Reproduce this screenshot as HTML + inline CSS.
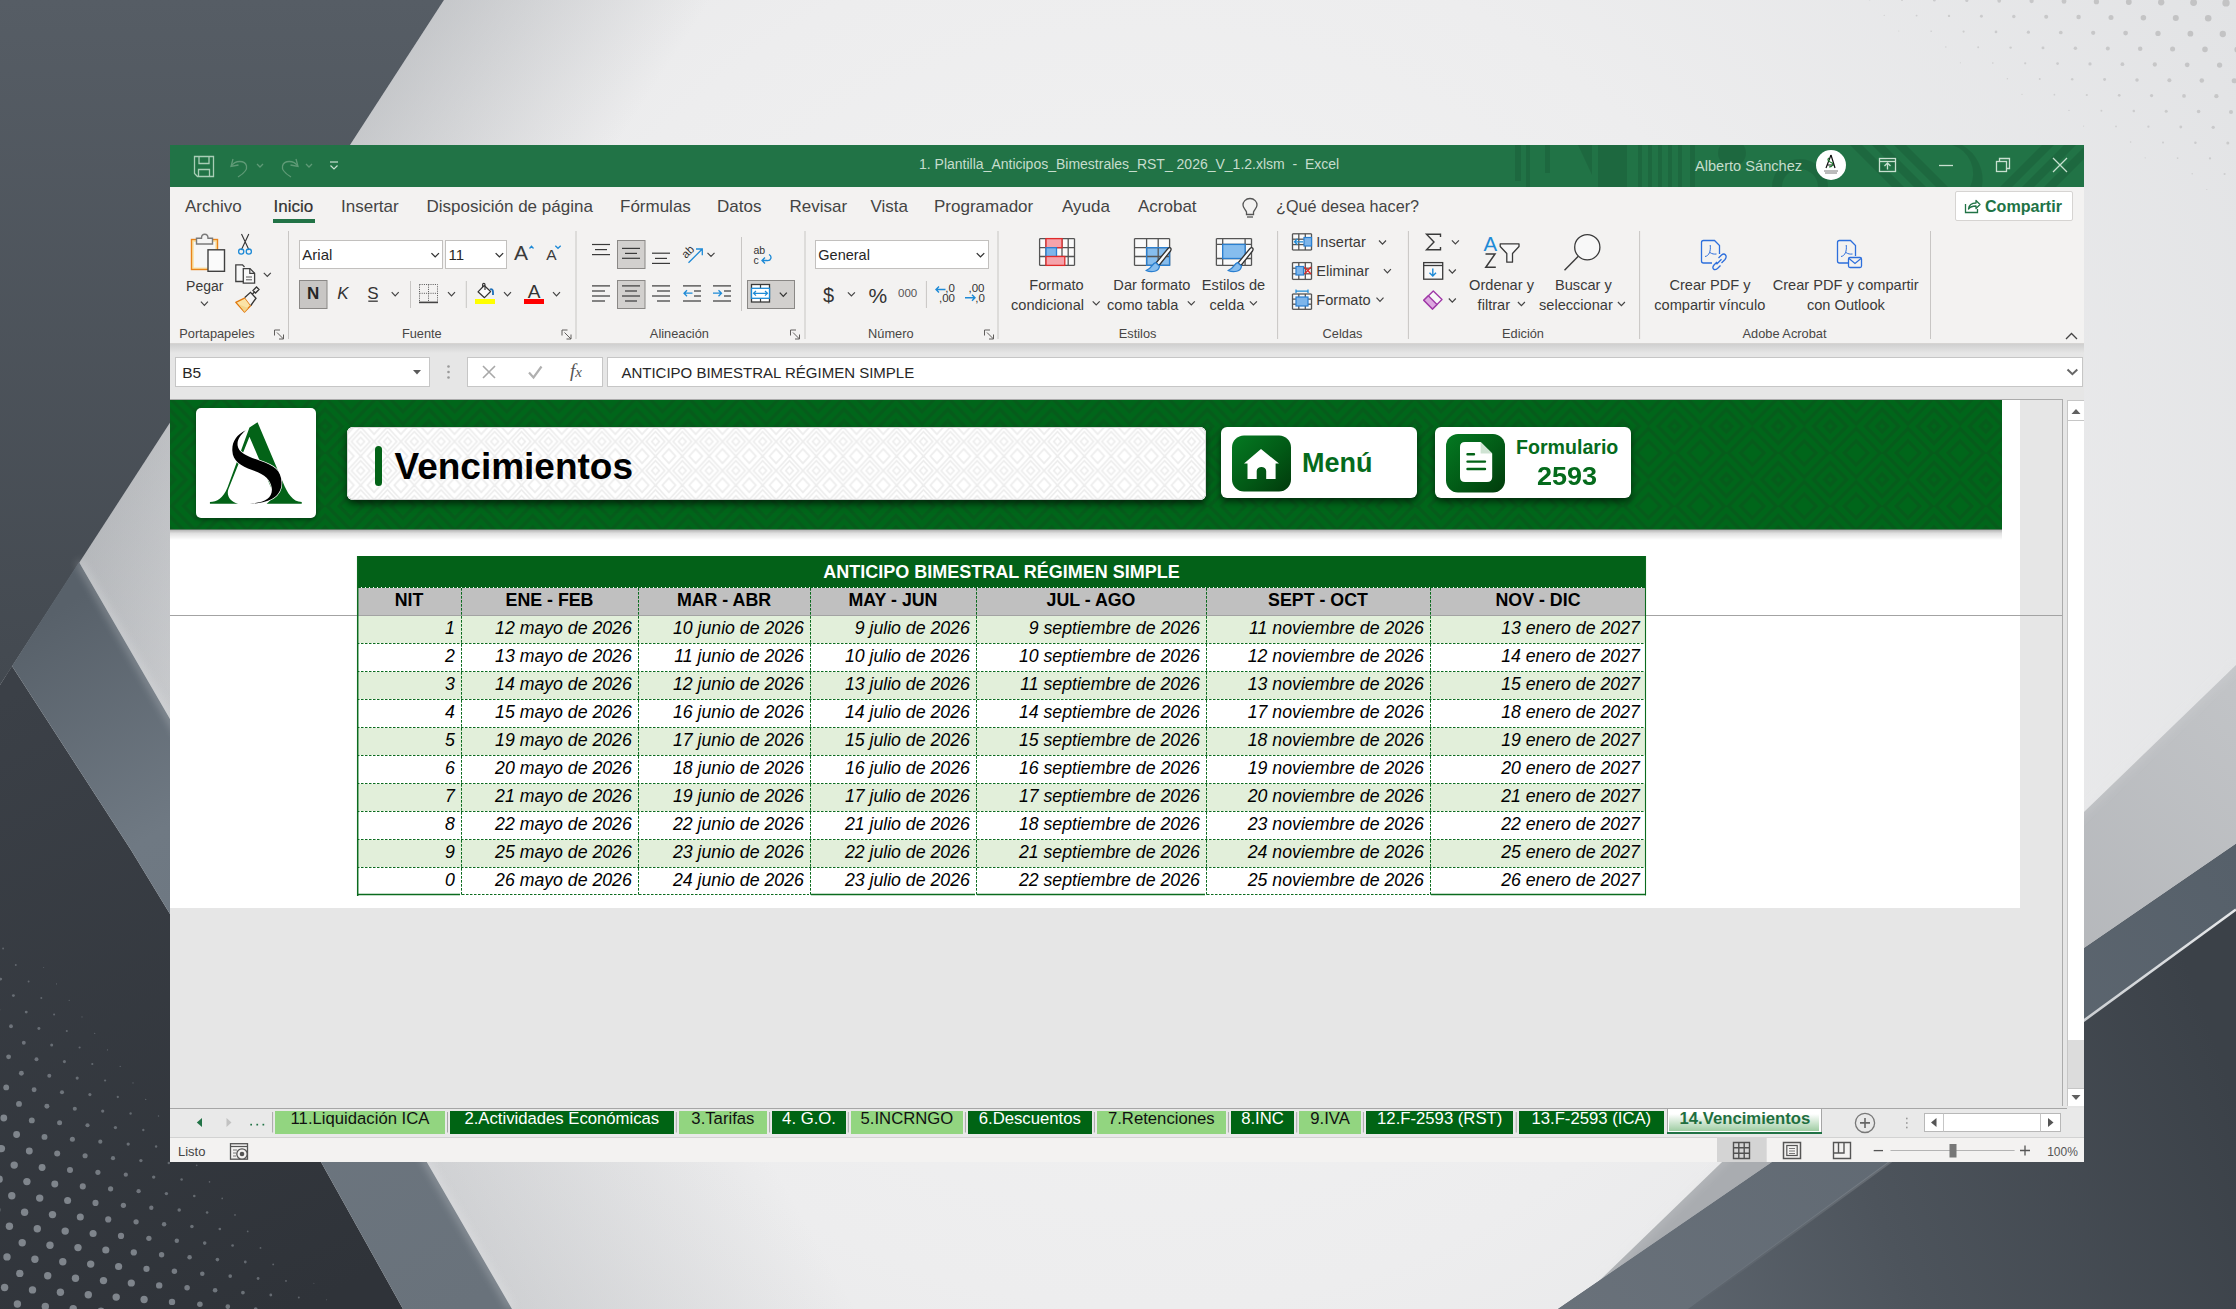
<!DOCTYPE html>
<html><head><meta charset="utf-8">
<style>
*{box-sizing:border-box;margin:0;padding:0}
html,body{width:2236px;height:1309px;overflow:hidden;font-family:"Liberation Sans",sans-serif;}
body{position:relative;background:#e9e9ea}
.a{position:absolute}
.t{position:absolute;white-space:nowrap;line-height:1}
#bg{position:absolute;left:0;top:0}
#win{position:absolute;left:170px;top:145px;width:1914px;height:1017px;background:#f3f2f1;overflow:hidden}
#title{position:absolute;left:0;top:0;width:1914px;height:42px;background:#217346}
#menu{position:absolute;left:0;top:42px;width:1914px;height:38px;background:#f3f2f1}
#ribbon{position:absolute;left:0;top:80px;width:1914px;height:119px;background:#f3f2f1}
#fbar{position:absolute;left:0;top:199px;width:1914px;height:56px;background:#e6e6e6}
#sheet{position:absolute;left:0;top:255px;width:1914px;height:708px;background:#e6e6e6}
#tabs{position:absolute;left:0;top:963px;width:1914px;height:29px;background:#f3f3f3}
#status{position:absolute;left:0;top:992px;width:1914px;height:25px;background:#f3f2f1}
</style></head>
<body>
<svg id="bg" width="2236" height="1309" viewBox="0 0 2236 1309">
  <defs>
    <radialGradient id="gl" cx="1150" cy="620" r="1250" gradientUnits="userSpaceOnUse">
      <stop offset="0" stop-color="#f4f4f4"/>
      <stop offset="0.55" stop-color="#ededee"/>
      <stop offset="1" stop-color="#e2e3e5"/>
    </radialGradient>
    <linearGradient id="gdk" x1="0" y1="0" x2="0" y2="685" gradientUnits="userSpaceOnUse">
      <stop offset="0" stop-color="#565d65"/>
      <stop offset="1" stop-color="#434950"/>
    </linearGradient>
    <linearGradient id="gdk2" x1="0" y1="700" x2="300" y2="1309" gradientUnits="userSpaceOnUse">
      <stop offset="0" stop-color="#3b4047"/>
      <stop offset="1" stop-color="#2f3339"/>
    </linearGradient>
    <linearGradient id="gband" x1="40" y1="620" x2="460" y2="1309" gradientUnits="userSpaceOnUse">
      <stop offset="0" stop-color="#58616a"/>
      <stop offset="0.3" stop-color="#6f7983"/>
      <stop offset="1" stop-color="#69727b"/>
    </linearGradient>
    <linearGradient id="gmed" x1="2236" y1="665" x2="1800" y2="1100" gradientUnits="userSpaceOnUse">
      <stop offset="0" stop-color="#c2c4c7"/>
      <stop offset="1" stop-color="#a9acb0"/>
    </linearGradient>
    <linearGradient id="gslab" x1="2236" y1="850" x2="1560" y2="1300" gradientUnits="userSpaceOnUse">
      <stop offset="0" stop-color="#56606a"/>
      <stop offset="1" stop-color="#69717a"/>
    </linearGradient>
    <linearGradient id="grd" x1="2236" y1="1100" x2="1650" y2="1309" gradientUnits="userSpaceOnUse">
      <stop offset="0" stop-color="#3b4148"/>
      <stop offset="0.6" stop-color="#4d545c"/>
      <stop offset="1" stop-color="#5e666f"/>
    </linearGradient>
    <linearGradient id="gwl" x1="2236" y1="909" x2="1688" y2="1309" gradientUnits="userSpaceOnUse">
      <stop offset="0" stop-color="#e6e8ea" stop-opacity="1"/>
      <stop offset="0.3" stop-color="#d8dbde" stop-opacity="0.9"/>
      <stop offset="0.6" stop-color="#c0c4c8" stop-opacity="0.25"/>
      <stop offset="1" stop-color="#c0c4c8" stop-opacity="0"/>
    </linearGradient>
    <linearGradient id="sh1" x1="222" y1="342" x2="410" y2="464" gradientUnits="userSpaceOnUse">
      <stop offset="0" stop-color="#8e9297" stop-opacity="0.38"/>
      <stop offset="1" stop-color="#8e9297" stop-opacity="0"/>
    </linearGradient>
    <linearGradient id="sh2" x1="295" y1="935" x2="555" y2="785" gradientUnits="userSpaceOnUse">
      <stop offset="0" stop-color="#8e9297" stop-opacity="0.28"/>
      <stop offset="1" stop-color="#8e9297" stop-opacity="0"/>
    </linearGradient>
    <filter id="blur8" x="-50%" y="-50%" width="200%" height="200%"><feGaussianBlur stdDeviation="14"/></filter>
    <filter id="blur3" x="-50%" y="-50%" width="200%" height="200%"><feGaussianBlur stdDeviation="4"/></filter>
  </defs>
  <rect x="0" y="0" width="2236" height="1309" fill="url(#gl)"/>
  <!-- soft shadows in light areas -->
  <polygon points="444,0 1400,0 1400,1309 512,1309 79,562 0,685" fill="url(#sh1)"/>
  <polygon points="79,562 512,1309 1400,1309 1400,0 444,0" fill="url(#sh2)"/>
  <polygon points="0,0 444,0 0,685" fill="url(#gdk)"/>
  <polygon points="0,685 12,666 131,850 321,1162 403,1309 0,1309" fill="url(#gdk2)"/>
  <polygon points="79,562 12,666 131,850 321,1162 403,1309 512,1309" fill="url(#gband)"/>
  <path d="M79 562 L512 1309" stroke="#f2f3f5" stroke-width="3" opacity="0.6" filter="url(#blur3)"/>
  <g><circle cx="4.6" cy="1287.5" r="3.70" fill="#7f858c" fill-opacity="1.00"/><circle cx="17.4" cy="1304.0" r="3.70" fill="#7f858c" fill-opacity="1.00"/><circle cx="7.0" cy="1256.9" r="3.70" fill="#7f858c" fill-opacity="1.00"/><circle cx="19.8" cy="1273.4" r="3.70" fill="#7f858c" fill-opacity="1.00"/><circle cx="32.5" cy="1289.9" r="3.70" fill="#7f858c" fill-opacity="1.00"/><circle cx="45.3" cy="1306.4" r="3.70" fill="#7f858c" fill-opacity="1.00"/><circle cx="-3.3" cy="1209.8" r="3.70" fill="#7f858c" fill-opacity="1.00"/><circle cx="9.4" cy="1226.3" r="3.70" fill="#7f858c" fill-opacity="1.00"/><circle cx="22.2" cy="1242.8" r="3.70" fill="#7f858c" fill-opacity="1.00"/><circle cx="34.9" cy="1259.3" r="3.70" fill="#7f858c" fill-opacity="1.00"/><circle cx="47.7" cy="1275.8" r="3.70" fill="#7f858c" fill-opacity="1.00"/><circle cx="60.4" cy="1292.3" r="3.70" fill="#7f858c" fill-opacity="1.00"/><circle cx="73.2" cy="1308.8" r="3.70" fill="#7f858c" fill-opacity="1.00"/><circle cx="-0.9" cy="1179.2" r="3.70" fill="#7f858c" fill-opacity="1.00"/><circle cx="11.8" cy="1195.7" r="3.70" fill="#7f858c" fill-opacity="1.00"/><circle cx="24.6" cy="1212.2" r="3.70" fill="#7f858c" fill-opacity="1.00"/><circle cx="37.3" cy="1228.7" r="3.70" fill="#7f858c" fill-opacity="1.00"/><circle cx="50.0" cy="1245.2" r="3.70" fill="#7f858c" fill-opacity="1.00"/><circle cx="62.8" cy="1261.7" r="3.70" fill="#7f858c" fill-opacity="1.00"/><circle cx="75.5" cy="1278.2" r="3.70" fill="#7f858c" fill-opacity="1.00"/><circle cx="88.3" cy="1294.7" r="3.70" fill="#7f858c" fill-opacity="1.00"/><circle cx="101.0" cy="1311.2" r="3.70" fill="#7f858c" fill-opacity="1.00"/><circle cx="1.4" cy="1148.6" r="3.70" fill="#7f858c" fill-opacity="1.00"/><circle cx="14.2" cy="1165.1" r="3.70" fill="#7f858c" fill-opacity="1.00"/><circle cx="26.9" cy="1181.6" r="3.70" fill="#7f858c" fill-opacity="1.00"/><circle cx="39.7" cy="1198.1" r="3.70" fill="#7f858c" fill-opacity="1.00"/><circle cx="52.5" cy="1214.6" r="3.70" fill="#7f858c" fill-opacity="1.00"/><circle cx="65.2" cy="1231.1" r="3.70" fill="#7f858c" fill-opacity="1.00"/><circle cx="78.0" cy="1247.6" r="3.70" fill="#7f858c" fill-opacity="1.00"/><circle cx="90.7" cy="1264.1" r="3.70" fill="#7f858c" fill-opacity="1.00"/><circle cx="103.5" cy="1280.6" r="3.70" fill="#7f858c" fill-opacity="1.00"/><circle cx="116.2" cy="1297.1" r="3.70" fill="#7f858c" fill-opacity="1.00"/><circle cx="128.9" cy="1313.6" r="3.70" fill="#7f858c" fill-opacity="1.00"/><circle cx="3.8" cy="1118.0" r="3.39" fill="#7f858c" fill-opacity="1.00"/><circle cx="16.6" cy="1134.5" r="3.42" fill="#7f858c" fill-opacity="1.00"/><circle cx="29.3" cy="1151.0" r="3.44" fill="#7f858c" fill-opacity="1.00"/><circle cx="42.1" cy="1167.5" r="3.46" fill="#7f858c" fill-opacity="1.00"/><circle cx="54.8" cy="1184.0" r="3.49" fill="#7f858c" fill-opacity="1.00"/><circle cx="67.6" cy="1200.5" r="3.51" fill="#7f858c" fill-opacity="1.00"/><circle cx="80.3" cy="1217.0" r="3.53" fill="#7f858c" fill-opacity="1.00"/><circle cx="93.1" cy="1233.5" r="3.55" fill="#7f858c" fill-opacity="1.00"/><circle cx="105.8" cy="1250.0" r="3.58" fill="#7f858c" fill-opacity="1.00"/><circle cx="118.6" cy="1266.5" r="3.60" fill="#7f858c" fill-opacity="1.00"/><circle cx="131.3" cy="1283.0" r="3.62" fill="#7f858c" fill-opacity="1.00"/><circle cx="144.1" cy="1299.5" r="3.65" fill="#7f858c" fill-opacity="1.00"/><circle cx="6.2" cy="1087.4" r="2.91" fill="#7f858c" fill-opacity="0.92"/><circle cx="19.0" cy="1103.9" r="2.93" fill="#7f858c" fill-opacity="0.92"/><circle cx="31.8" cy="1120.4" r="2.95" fill="#7f858c" fill-opacity="0.93"/><circle cx="44.5" cy="1136.9" r="2.97" fill="#7f858c" fill-opacity="0.93"/><circle cx="57.2" cy="1153.4" r="3.00" fill="#7f858c" fill-opacity="0.94"/><circle cx="70.0" cy="1169.9" r="3.02" fill="#7f858c" fill-opacity="0.94"/><circle cx="82.8" cy="1186.4" r="3.04" fill="#7f858c" fill-opacity="0.94"/><circle cx="95.5" cy="1202.9" r="3.07" fill="#7f858c" fill-opacity="0.95"/><circle cx="108.2" cy="1219.4" r="3.09" fill="#7f858c" fill-opacity="0.95"/><circle cx="121.0" cy="1235.9" r="3.11" fill="#7f858c" fill-opacity="0.95"/><circle cx="133.8" cy="1252.4" r="3.14" fill="#7f858c" fill-opacity="0.96"/><circle cx="146.5" cy="1268.9" r="3.16" fill="#7f858c" fill-opacity="0.96"/><circle cx="159.2" cy="1285.4" r="3.18" fill="#7f858c" fill-opacity="0.97"/><circle cx="172.0" cy="1301.9" r="3.21" fill="#7f858c" fill-opacity="0.97"/><circle cx="-4.1" cy="1040.3" r="2.40" fill="#7f858c" fill-opacity="0.84"/><circle cx="8.6" cy="1056.8" r="2.42" fill="#7f858c" fill-opacity="0.84"/><circle cx="21.4" cy="1073.3" r="2.44" fill="#7f858c" fill-opacity="0.85"/><circle cx="34.1" cy="1089.8" r="2.46" fill="#7f858c" fill-opacity="0.85"/><circle cx="46.9" cy="1106.3" r="2.49" fill="#7f858c" fill-opacity="0.85"/><circle cx="59.6" cy="1122.8" r="2.51" fill="#7f858c" fill-opacity="0.86"/><circle cx="72.4" cy="1139.3" r="2.53" fill="#7f858c" fill-opacity="0.86"/><circle cx="85.1" cy="1155.8" r="2.56" fill="#7f858c" fill-opacity="0.86"/><circle cx="97.9" cy="1172.3" r="2.58" fill="#7f858c" fill-opacity="0.87"/><circle cx="110.6" cy="1188.8" r="2.60" fill="#7f858c" fill-opacity="0.87"/><circle cx="123.4" cy="1205.3" r="2.63" fill="#7f858c" fill-opacity="0.88"/><circle cx="136.1" cy="1221.8" r="2.65" fill="#7f858c" fill-opacity="0.88"/><circle cx="148.9" cy="1238.3" r="2.67" fill="#7f858c" fill-opacity="0.88"/><circle cx="161.6" cy="1254.8" r="2.70" fill="#7f858c" fill-opacity="0.89"/><circle cx="174.4" cy="1271.3" r="2.72" fill="#7f858c" fill-opacity="0.89"/><circle cx="187.1" cy="1287.8" r="2.74" fill="#7f858c" fill-opacity="0.89"/><circle cx="199.9" cy="1304.3" r="2.77" fill="#7f858c" fill-opacity="0.90"/><circle cx="-1.7" cy="1009.7" r="1.91" fill="#7f858c" fill-opacity="0.76"/><circle cx="11.0" cy="1026.2" r="1.93" fill="#7f858c" fill-opacity="0.76"/><circle cx="23.8" cy="1042.7" r="1.95" fill="#7f858c" fill-opacity="0.77"/><circle cx="36.5" cy="1059.2" r="1.98" fill="#7f858c" fill-opacity="0.77"/><circle cx="49.3" cy="1075.7" r="2.00" fill="#7f858c" fill-opacity="0.77"/><circle cx="62.0" cy="1092.2" r="2.02" fill="#7f858c" fill-opacity="0.78"/><circle cx="74.8" cy="1108.7" r="2.05" fill="#7f858c" fill-opacity="0.78"/><circle cx="87.5" cy="1125.2" r="2.07" fill="#7f858c" fill-opacity="0.79"/><circle cx="100.3" cy="1141.7" r="2.09" fill="#7f858c" fill-opacity="0.79"/><circle cx="113.0" cy="1158.2" r="2.12" fill="#7f858c" fill-opacity="0.79"/><circle cx="125.8" cy="1174.7" r="2.14" fill="#7f858c" fill-opacity="0.80"/><circle cx="138.6" cy="1191.2" r="2.16" fill="#7f858c" fill-opacity="0.80"/><circle cx="151.3" cy="1207.7" r="2.19" fill="#7f858c" fill-opacity="0.80"/><circle cx="164.1" cy="1224.2" r="2.21" fill="#7f858c" fill-opacity="0.81"/><circle cx="176.8" cy="1240.7" r="2.23" fill="#7f858c" fill-opacity="0.81"/><circle cx="189.6" cy="1257.2" r="2.26" fill="#7f858c" fill-opacity="0.82"/><circle cx="202.3" cy="1273.7" r="2.28" fill="#7f858c" fill-opacity="0.82"/><circle cx="215.1" cy="1290.2" r="2.30" fill="#7f858c" fill-opacity="0.82"/><circle cx="227.8" cy="1306.7" r="2.33" fill="#7f858c" fill-opacity="0.83"/><circle cx="0.7" cy="979.1" r="1.42" fill="#7f858c" fill-opacity="0.68"/><circle cx="13.4" cy="995.6" r="1.44" fill="#7f858c" fill-opacity="0.68"/><circle cx="26.2" cy="1012.1" r="1.47" fill="#7f858c" fill-opacity="0.69"/><circle cx="38.9" cy="1028.6" r="1.49" fill="#7f858c" fill-opacity="0.69"/><circle cx="51.7" cy="1045.1" r="1.51" fill="#7f858c" fill-opacity="0.70"/><circle cx="64.4" cy="1061.6" r="1.54" fill="#7f858c" fill-opacity="0.70"/><circle cx="77.2" cy="1078.1" r="1.56" fill="#7f858c" fill-opacity="0.70"/><circle cx="89.9" cy="1094.6" r="1.58" fill="#7f858c" fill-opacity="0.71"/><circle cx="102.7" cy="1111.1" r="1.61" fill="#7f858c" fill-opacity="0.71"/><circle cx="115.4" cy="1127.6" r="1.63" fill="#7f858c" fill-opacity="0.71"/><circle cx="128.2" cy="1144.1" r="1.65" fill="#7f858c" fill-opacity="0.72"/><circle cx="140.9" cy="1160.6" r="1.68" fill="#7f858c" fill-opacity="0.72"/><circle cx="153.7" cy="1177.1" r="1.70" fill="#7f858c" fill-opacity="0.73"/><circle cx="166.4" cy="1193.6" r="1.72" fill="#7f858c" fill-opacity="0.73"/><circle cx="179.2" cy="1210.1" r="1.75" fill="#7f858c" fill-opacity="0.73"/><circle cx="191.9" cy="1226.6" r="1.77" fill="#7f858c" fill-opacity="0.74"/><circle cx="204.7" cy="1243.1" r="1.79" fill="#7f858c" fill-opacity="0.74"/><circle cx="217.4" cy="1259.6" r="1.82" fill="#7f858c" fill-opacity="0.74"/><circle cx="230.2" cy="1276.1" r="1.84" fill="#7f858c" fill-opacity="0.75"/><circle cx="242.9" cy="1292.6" r="1.86" fill="#7f858c" fill-opacity="0.75"/><circle cx="255.7" cy="1309.1" r="1.89" fill="#7f858c" fill-opacity="0.76"/><circle cx="3.1" cy="948.5" r="0.93" fill="#7f858c" fill-opacity="0.60"/><circle cx="15.8" cy="965.0" r="0.96" fill="#7f858c" fill-opacity="0.61"/><circle cx="28.6" cy="981.5" r="0.98" fill="#7f858c" fill-opacity="0.61"/><circle cx="41.3" cy="998.0" r="1.00" fill="#7f858c" fill-opacity="0.61"/><circle cx="54.1" cy="1014.5" r="1.03" fill="#7f858c" fill-opacity="0.62"/><circle cx="66.8" cy="1031.0" r="1.05" fill="#7f858c" fill-opacity="0.62"/><circle cx="79.6" cy="1047.5" r="1.07" fill="#7f858c" fill-opacity="0.62"/><circle cx="92.3" cy="1064.0" r="1.10" fill="#7f858c" fill-opacity="0.63"/><circle cx="105.1" cy="1080.5" r="1.12" fill="#7f858c" fill-opacity="0.63"/><circle cx="117.8" cy="1097.0" r="1.14" fill="#7f858c" fill-opacity="0.64"/><circle cx="130.6" cy="1113.5" r="1.17" fill="#7f858c" fill-opacity="0.64"/><circle cx="143.3" cy="1130.0" r="1.19" fill="#7f858c" fill-opacity="0.64"/><circle cx="156.1" cy="1146.5" r="1.21" fill="#7f858c" fill-opacity="0.65"/><circle cx="168.8" cy="1163.0" r="1.24" fill="#7f858c" fill-opacity="0.65"/><circle cx="181.6" cy="1179.5" r="1.26" fill="#7f858c" fill-opacity="0.65"/><circle cx="194.3" cy="1196.0" r="1.28" fill="#7f858c" fill-opacity="0.66"/><circle cx="207.1" cy="1212.5" r="1.31" fill="#7f858c" fill-opacity="0.66"/><circle cx="219.8" cy="1229.0" r="1.33" fill="#7f858c" fill-opacity="0.67"/><circle cx="232.6" cy="1245.5" r="1.35" fill="#7f858c" fill-opacity="0.67"/><circle cx="245.3" cy="1262.0" r="1.38" fill="#7f858c" fill-opacity="0.67"/><circle cx="258.1" cy="1278.5" r="1.40" fill="#7f858c" fill-opacity="0.68"/><circle cx="270.8" cy="1295.0" r="1.42" fill="#7f858c" fill-opacity="0.68"/><circle cx="283.6" cy="1311.5" r="1.44" fill="#7f858c" fill-opacity="0.68"/><circle cx="43.7" cy="967.4" r="0.52" fill="#7f858c" fill-opacity="0.53"/><circle cx="56.5" cy="983.9" r="0.54" fill="#7f858c" fill-opacity="0.54"/><circle cx="69.2" cy="1000.4" r="0.56" fill="#7f858c" fill-opacity="0.54"/><circle cx="82.0" cy="1016.9" r="0.59" fill="#7f858c" fill-opacity="0.55"/><circle cx="94.7" cy="1033.4" r="0.61" fill="#7f858c" fill-opacity="0.55"/><circle cx="107.5" cy="1049.9" r="0.63" fill="#7f858c" fill-opacity="0.55"/><circle cx="120.2" cy="1066.4" r="0.66" fill="#7f858c" fill-opacity="0.56"/><circle cx="133.0" cy="1082.9" r="0.68" fill="#7f858c" fill-opacity="0.56"/><circle cx="145.7" cy="1099.4" r="0.70" fill="#7f858c" fill-opacity="0.56"/><circle cx="158.5" cy="1115.9" r="0.73" fill="#7f858c" fill-opacity="0.57"/><circle cx="171.2" cy="1132.4" r="0.75" fill="#7f858c" fill-opacity="0.57"/><circle cx="184.0" cy="1148.9" r="0.77" fill="#7f858c" fill-opacity="0.58"/><circle cx="196.7" cy="1165.4" r="0.80" fill="#7f858c" fill-opacity="0.58"/><circle cx="209.5" cy="1181.9" r="0.82" fill="#7f858c" fill-opacity="0.58"/><circle cx="222.2" cy="1198.4" r="0.84" fill="#7f858c" fill-opacity="0.59"/><circle cx="235.0" cy="1214.9" r="0.87" fill="#7f858c" fill-opacity="0.59"/><circle cx="247.7" cy="1231.4" r="0.89" fill="#7f858c" fill-opacity="0.59"/><circle cx="260.5" cy="1247.9" r="0.91" fill="#7f858c" fill-opacity="0.60"/><circle cx="273.2" cy="1264.4" r="0.93" fill="#7f858c" fill-opacity="0.60"/><circle cx="286.0" cy="1280.9" r="0.96" fill="#7f858c" fill-opacity="0.61"/><circle cx="298.8" cy="1297.4" r="0.98" fill="#7f858c" fill-opacity="0.61"/><circle cx="311.5" cy="1313.9" r="1.00" fill="#7f858c" fill-opacity="0.61"/><circle cx="313.9" cy="1283.3" r="0.52" fill="#7f858c" fill-opacity="0.53"/><circle cx="326.6" cy="1299.8" r="0.54" fill="#7f858c" fill-opacity="0.54"/></g>
  <g><circle cx="1837.2" cy="-0.7" r="0.53" fill="#c3c3c4" fill-opacity="0.63"/><circle cx="1869.6" cy="-0.4" r="0.79" fill="#c3c3c4" fill-opacity="0.68"/><circle cx="1902.0" cy="-0.1" r="1.06" fill="#c3c3c4" fill-opacity="0.72"/><circle cx="1884.2" cy="15.3" r="0.67" fill="#c3c3c4" fill-opacity="0.66"/><circle cx="1934.4" cy="0.2" r="1.32" fill="#c3c3c4" fill-opacity="0.76"/><circle cx="1916.6" cy="15.6" r="0.93" fill="#c3c3c4" fill-opacity="0.70"/><circle cx="1898.8" cy="31.0" r="0.55" fill="#c3c3c4" fill-opacity="0.64"/><circle cx="1966.8" cy="0.5" r="1.58" fill="#c3c3c4" fill-opacity="0.80"/><circle cx="1949.0" cy="15.9" r="1.19" fill="#c3c3c4" fill-opacity="0.74"/><circle cx="1931.2" cy="31.3" r="0.81" fill="#c3c3c4" fill-opacity="0.68"/><circle cx="1999.2" cy="0.8" r="1.84" fill="#c3c3c4" fill-opacity="0.84"/><circle cx="1981.4" cy="16.2" r="1.46" fill="#c3c3c4" fill-opacity="0.78"/><circle cx="1963.6" cy="31.6" r="1.07" fill="#c3c3c4" fill-opacity="0.72"/><circle cx="1945.8" cy="47.0" r="0.68" fill="#c3c3c4" fill-opacity="0.66"/><circle cx="2031.6" cy="1.1" r="2.10" fill="#c3c3c4" fill-opacity="0.88"/><circle cx="2013.8" cy="16.5" r="1.72" fill="#c3c3c4" fill-opacity="0.82"/><circle cx="1996.0" cy="31.9" r="1.33" fill="#c3c3c4" fill-opacity="0.76"/><circle cx="1978.2" cy="47.3" r="0.95" fill="#c3c3c4" fill-opacity="0.70"/><circle cx="1960.4" cy="62.7" r="0.56" fill="#c3c3c4" fill-opacity="0.64"/><circle cx="2064.0" cy="1.4" r="2.36" fill="#c3c3c4" fill-opacity="0.92"/><circle cx="2046.2" cy="16.8" r="1.98" fill="#c3c3c4" fill-opacity="0.86"/><circle cx="2028.4" cy="32.2" r="1.59" fill="#c3c3c4" fill-opacity="0.80"/><circle cx="2010.6" cy="47.6" r="1.21" fill="#c3c3c4" fill-opacity="0.74"/><circle cx="1992.8" cy="63.0" r="0.82" fill="#c3c3c4" fill-opacity="0.68"/><circle cx="2096.4" cy="1.7" r="2.63" fill="#c3c3c4" fill-opacity="0.96"/><circle cx="2078.6" cy="17.1" r="2.24" fill="#c3c3c4" fill-opacity="0.90"/><circle cx="2060.8" cy="32.5" r="1.85" fill="#c3c3c4" fill-opacity="0.84"/><circle cx="2043.0" cy="47.9" r="1.47" fill="#c3c3c4" fill-opacity="0.78"/><circle cx="2025.2" cy="63.3" r="1.08" fill="#c3c3c4" fill-opacity="0.72"/><circle cx="2007.4" cy="78.7" r="0.70" fill="#c3c3c4" fill-opacity="0.66"/><circle cx="2128.8" cy="2.0" r="2.89" fill="#c3c3c4" fill-opacity="1.00"/><circle cx="2111.0" cy="17.4" r="2.50" fill="#c3c3c4" fill-opacity="0.95"/><circle cx="2093.2" cy="32.8" r="2.12" fill="#c3c3c4" fill-opacity="0.88"/><circle cx="2075.4" cy="48.2" r="1.73" fill="#c3c3c4" fill-opacity="0.82"/><circle cx="2057.6" cy="63.6" r="1.35" fill="#c3c3c4" fill-opacity="0.76"/><circle cx="2039.8" cy="79.0" r="0.96" fill="#c3c3c4" fill-opacity="0.70"/><circle cx="2022.0" cy="94.4" r="0.58" fill="#c3c3c4" fill-opacity="0.64"/><circle cx="2161.2" cy="2.3" r="3.15" fill="#c3c3c4" fill-opacity="1.00"/><circle cx="2143.4" cy="17.7" r="2.76" fill="#c3c3c4" fill-opacity="0.99"/><circle cx="2125.6" cy="33.1" r="2.38" fill="#c3c3c4" fill-opacity="0.93"/><circle cx="2107.8" cy="48.5" r="1.99" fill="#c3c3c4" fill-opacity="0.86"/><circle cx="2090.0" cy="63.9" r="1.61" fill="#c3c3c4" fill-opacity="0.80"/><circle cx="2072.2" cy="79.3" r="1.22" fill="#c3c3c4" fill-opacity="0.74"/><circle cx="2054.4" cy="94.7" r="0.84" fill="#c3c3c4" fill-opacity="0.68"/><circle cx="2193.6" cy="2.6" r="3.41" fill="#c3c3c4" fill-opacity="1.00"/><circle cx="2175.8" cy="18.0" r="3.03" fill="#c3c3c4" fill-opacity="1.00"/><circle cx="2158.0" cy="33.4" r="2.64" fill="#c3c3c4" fill-opacity="0.97"/><circle cx="2140.2" cy="48.8" r="2.25" fill="#c3c3c4" fill-opacity="0.91"/><circle cx="2122.4" cy="64.2" r="1.87" fill="#c3c3c4" fill-opacity="0.85"/><circle cx="2104.6" cy="79.6" r="1.48" fill="#c3c3c4" fill-opacity="0.78"/><circle cx="2086.8" cy="95.0" r="1.10" fill="#c3c3c4" fill-opacity="0.72"/><circle cx="2069.0" cy="110.4" r="0.71" fill="#c3c3c4" fill-opacity="0.66"/><circle cx="2226.0" cy="2.9" r="3.67" fill="#c3c3c4" fill-opacity="1.00"/><circle cx="2208.2" cy="18.3" r="3.29" fill="#c3c3c4" fill-opacity="1.00"/><circle cx="2190.4" cy="33.7" r="2.90" fill="#c3c3c4" fill-opacity="1.00"/><circle cx="2172.6" cy="49.1" r="2.52" fill="#c3c3c4" fill-opacity="0.95"/><circle cx="2154.8" cy="64.5" r="2.13" fill="#c3c3c4" fill-opacity="0.89"/><circle cx="2137.0" cy="79.9" r="1.75" fill="#c3c3c4" fill-opacity="0.83"/><circle cx="2119.2" cy="95.3" r="1.36" fill="#c3c3c4" fill-opacity="0.76"/><circle cx="2101.4" cy="110.7" r="0.98" fill="#c3c3c4" fill-opacity="0.70"/><circle cx="2083.6" cy="126.1" r="0.59" fill="#c3c3c4" fill-opacity="0.64"/><circle cx="2240.6" cy="18.6" r="3.55" fill="#c3c3c4" fill-opacity="1.00"/><circle cx="2222.8" cy="34.0" r="3.16" fill="#c3c3c4" fill-opacity="1.00"/><circle cx="2205.0" cy="49.4" r="2.78" fill="#c3c3c4" fill-opacity="0.99"/><circle cx="2187.2" cy="64.8" r="2.39" fill="#c3c3c4" fill-opacity="0.93"/><circle cx="2169.4" cy="80.2" r="2.01" fill="#c3c3c4" fill-opacity="0.87"/><circle cx="2151.6" cy="95.6" r="1.62" fill="#c3c3c4" fill-opacity="0.81"/><circle cx="2133.8" cy="111.0" r="1.24" fill="#c3c3c4" fill-opacity="0.75"/><circle cx="2116.0" cy="126.4" r="0.85" fill="#c3c3c4" fill-opacity="0.68"/><circle cx="2237.4" cy="49.7" r="3.04" fill="#c3c3c4" fill-opacity="1.00"/><circle cx="2219.6" cy="65.1" r="2.65" fill="#c3c3c4" fill-opacity="0.97"/><circle cx="2201.8" cy="80.5" r="2.27" fill="#c3c3c4" fill-opacity="0.91"/><circle cx="2184.0" cy="95.9" r="1.88" fill="#c3c3c4" fill-opacity="0.85"/><circle cx="2166.2" cy="111.3" r="1.50" fill="#c3c3c4" fill-opacity="0.79"/><circle cx="2148.4" cy="126.7" r="1.11" fill="#c3c3c4" fill-opacity="0.73"/><circle cx="2130.6" cy="142.1" r="0.73" fill="#c3c3c4" fill-opacity="0.67"/><circle cx="2234.2" cy="80.8" r="2.53" fill="#c3c3c4" fill-opacity="0.95"/><circle cx="2216.4" cy="96.2" r="2.15" fill="#c3c3c4" fill-opacity="0.89"/><circle cx="2198.6" cy="111.6" r="1.76" fill="#c3c3c4" fill-opacity="0.83"/><circle cx="2180.8" cy="127.0" r="1.38" fill="#c3c3c4" fill-opacity="0.77"/><circle cx="2163.0" cy="142.4" r="0.99" fill="#c3c3c4" fill-opacity="0.71"/><circle cx="2145.2" cy="157.8" r="0.61" fill="#c3c3c4" fill-opacity="0.65"/><circle cx="2231.0" cy="111.9" r="2.02" fill="#c3c3c4" fill-opacity="0.87"/><circle cx="2213.2" cy="127.3" r="1.64" fill="#c3c3c4" fill-opacity="0.81"/><circle cx="2195.4" cy="142.7" r="1.25" fill="#c3c3c4" fill-opacity="0.75"/><circle cx="2177.6" cy="158.1" r="0.87" fill="#c3c3c4" fill-opacity="0.69"/><circle cx="2227.8" cy="143.0" r="1.51" fill="#c3c3c4" fill-opacity="0.79"/><circle cx="2210.0" cy="158.4" r="1.13" fill="#c3c3c4" fill-opacity="0.73"/><circle cx="2192.2" cy="173.8" r="0.74" fill="#c3c3c4" fill-opacity="0.67"/><circle cx="2242.4" cy="158.7" r="1.39" fill="#c3c3c4" fill-opacity="0.77"/><circle cx="2224.6" cy="174.1" r="1.01" fill="#c3c3c4" fill-opacity="0.71"/><circle cx="2206.8" cy="189.5" r="0.62" fill="#c3c3c4" fill-opacity="0.65"/><circle cx="2239.2" cy="189.8" r="0.88" fill="#c3c3c4" fill-opacity="0.69"/></g>
  <polygon points="2236,665 1599,1281 2236,844" fill="url(#gmed)"/>
  <path d="M2236 665 L1599 1281" stroke="#e2e3e5" stroke-width="2" opacity="0.7" filter="url(#blur3)"/>
  <polygon points="2236,844 1558,1309 2236,1309" fill="url(#grd)"/>
  <polygon points="2236,844 1558,1309 1688,1309 2236,909" fill="url(#gslab)"/>
  <path d="M2236 909.5 L1688 1309.5" stroke="url(#gwl)" stroke-width="2.6"/>
</svg>

<div id="win">
  <div id="title"></div>
  <div id="menu"></div>
  <div id="ribbon"></div>
  <div id="fbar"></div>
  <div id="sheet"></div>
  <div id="tabs"></div>
  <div id="status"></div>
</div>

<!-- TITLE BAR -->
<svg class="a" style="left:1500px;top:145px" width="584" height="42" viewBox="0 0 584 42">
  <g fill="#000" opacity="0.09">
    <rect x="15" y="0" width="6" height="36"/><rect x="26" y="0" width="4" height="42"/><rect x="45" y="0" width="5" height="28"/>
    <path d="M78 0 L92 0 L92 30 Z"/>
    <rect x="98" y="0" width="29" height="42"/>
    <rect x="138" y="0" width="4" height="42"/><rect x="148" y="0" width="4" height="42"/><rect x="158" y="0" width="4" height="42"/><rect x="168" y="0" width="4" height="42"/><rect x="178" y="0" width="4" height="42"/><rect x="190" y="0" width="5" height="42"/>
    <circle cx="232" cy="8" r="14"/>
    <path d="M272 42 A28 28 0 0 1 328 42 L318 42 A18 18 0 0 0 282 42 Z"/>
    <path d="M350 0 L362 0 L404 42 L392 42 Z"/><path d="M372 0 L384 0 L426 42 L414 42 Z"/><path d="M394 0 L406 0 L448 42 L436 42 Z"/>
    <path d="M462 0 A40 40 0 0 1 482 42 L470 42 A30 30 0 0 0 452 0 Z"/>
    <path d="M500 42 L542 0 L554 0 L512 42 Z"/><path d="M522 42 L564 0 L576 0 L534 42 Z"/><path d="M544 42 L584 2 L584 14 L556 42 Z"/>
  </g>
</svg>
<svg class="a" style="left:190px;top:153px" width="160" height="28" viewBox="0 0 160 28">
  <g fill="none" stroke="#a9cdb6" stroke-width="1.3">
    <path d="M4.5 3.5 H23.5 V23.5 H7.5 L4.5 20.5 Z"/>
    <path d="M9 3.5 V10.5 H19 V3.5"/>
    <path d="M8.5 23.5 V16.5 H19.5 V23.5"/>
  </g>
  <g fill="none" stroke="#5f9a76" stroke-width="1.3">
    <path d="M43 6 L41 13.5 L48.5 12"/>
    <path d="M41.5 13 C45 7 55 7 56.5 13 C57.5 17 53 21 48 24"/>
    <path d="M67 11 L70 14 L73 11"/>
    <path d="M106 6 L108 13.5 L100.5 12"/>
    <path d="M107.5 13 C104 7 94 7 92.5 13 C91.5 17 96 21 101 24"/>
    <path d="M116 11 L119 14 L122 11"/>
  </g>
  <g fill="none" stroke="#c8e0d0" stroke-width="1.2">
    <path d="M140 9 H148"/><path d="M140.5 12.5 L144 16 L147.5 12.5"/>
  </g>
</svg>
<div class="t" style="left:919px;top:157px;font-size:14px;color:#c6ddcd">1. Plantilla_Anticipos_Bimestrales_RST_ 2026_V_1.2.xlsm&nbsp;&nbsp;-&nbsp;&nbsp;Excel</div>
<div class="t" style="left:1695px;top:158.5px;font-size:14.6px;color:#c6ddcd">Alberto Sánchez</div>
<svg class="a" style="left:1815px;top:149px" width="32" height="32" viewBox="0 0 32 32">
  <circle cx="16" cy="16" r="15" fill="#fff"/>
  <path d="M16 6 L11 19 M16 6 L20 19 M12.5 16 H19" stroke="#111" stroke-width="1.2" fill="none"/>
  <path d="M14 9 C11 11 15 13 17 14 C19 15 17 18 14 18" stroke="#1a7a2a" stroke-width="1.1" fill="none"/>
  <path d="M9 22 H23 M10 24 H22" stroke="#555" stroke-width="0.8"/>
</svg>
<svg class="a" style="left:1870px;top:150px" width="210" height="30" viewBox="0 0 210 30">
  <g fill="none" stroke="#c8e0d0" stroke-width="1.3">
    <rect x="9.5" y="8.5" width="16" height="13"/><path d="M9.5 11.5 H25.5"/><path d="M17.5 19.5 V13.5 M14.5 16 L17.5 13 L20.5 16"/>
    <path d="M69 15.5 H83"/>
    <rect x="126.5" y="11.5" width="10" height="10"/><path d="M129.5 11.5 V8.5 H139.5 V18.5 H136.5"/>
    <path d="M183 8 L197 22 M197 8 L183 22"/>
  </g>
</svg>

<!-- MENU ROW -->
<div class="t" style="left:185px;top:197.6px;font-size:17px;color:#444">Archivo</div>
<div class="t" style="left:273.5px;top:197.6px;font-size:17px;color:#333;-webkit-text-stroke:0.2px #333">Inicio</div>
<div class="a" style="left:273px;top:219px;width:42px;height:4px;background:#217346"></div>
<div class="t" style="left:341px;top:197.6px;font-size:17px;color:#444">Insertar</div>
<div class="t" style="left:426.5px;top:197.6px;font-size:17px;color:#444">Disposición de página</div>
<div class="t" style="left:620px;top:197.6px;font-size:17px;color:#444">Fórmulas</div>
<div class="t" style="left:717px;top:197.6px;font-size:17px;color:#444">Datos</div>
<div class="t" style="left:789.5px;top:197.6px;font-size:17px;color:#444">Revisar</div>
<div class="t" style="left:870.5px;top:197.6px;font-size:17px;color:#444">Vista</div>
<div class="t" style="left:934px;top:197.6px;font-size:17px;color:#444">Programador</div>
<div class="t" style="left:1062px;top:197.6px;font-size:17px;color:#444">Ayuda</div>
<div class="t" style="left:1138px;top:197.6px;font-size:17px;color:#444">Acrobat</div>
<svg class="a" style="left:1240px;top:196px" width="20" height="24" viewBox="0 0 20 24">
  <path d="M10 2.5 C5.5 2.5 3 6 3 9 C3 12 5.5 13.5 6.5 16 V18.5 H13.5 V16 C14.5 13.5 17 12 17 9 C17 6 14.5 2.5 10 2.5 Z" fill="none" stroke="#555" stroke-width="1.3"/>
  <path d="M7 21 H13" stroke="#555" stroke-width="1.3"/>
</svg>
<div class="t" style="left:1276px;top:198.2px;font-size:16.2px;color:#444">¿Qué desea hacer?</div>
<div class="a" style="left:1955px;top:191px;width:118px;height:30px;background:#fff;border:1px solid #d6d4d2;border-radius:2px"></div>
<svg class="a" style="left:1962px;top:196px" width="20" height="20" viewBox="0 0 20 20">
  <path d="M3.5 8 V16.5 H15.5 V13" fill="none" stroke="#217346" stroke-width="1.3"/>
  <path d="M6.5 13 C7 9 10 7 14 7 V4.5 L18 8.5 L14 12.5 V10 C10.5 10 8 11 6.5 13 Z" fill="none" stroke="#217346" stroke-width="1.3" stroke-linejoin="round"/>
</svg>
<div class="t" style="left:1985px;top:198.4px;font-size:16.1px;font-weight:700;color:#217346">Compartir</div>

<!-- RIBBON -->
<svg class="a" style="left:0;top:0" width="2236" height="1309" viewBox="0 0 2236 1309"><rect x="191.5" y="239.5" width="26" height="30" fill="#fbe3a6" stroke="#e8841a" stroke-width="1.4"/><rect x="193.8" y="242" width="21.5" height="25.5" fill="#f6f6f6"/><path d="M196.5 244 V238.2 H201.5 C201.5 233 208 233 208 238.2 H212.5 V244 Z" fill="#f4f4f4" stroke="#7a7a7a" stroke-width="1.4"/><rect x="208" y="249.8" width="16.5" height="21.5" fill="#fafafa" stroke="#404040" stroke-width="1.4"/><path d="M200.9 301.7 L204.4 305.3 L207.9 301.7" fill="none" stroke="#444" stroke-width="1.2"/><path d="M241.5 234 L249 250 M248.8 234 L241.3 250" stroke="#333" stroke-width="1.1" fill="none"/><circle cx="241.2" cy="251.6" r="2.6" fill="none" stroke="#1e8ad6" stroke-width="1.3"/><circle cx="248.8" cy="251.6" r="2.6" fill="none" stroke="#1e8ad6" stroke-width="1.3"/><path d="M243.5 281.5 H235.8 V264.8 H242.5 L244.5 267" fill="#f8f8f8" stroke="#404040" stroke-width="1.3"/><path d="M243.3 268.6 H250 L254.6 273.2 V283.2 H243.3 Z" fill="#f8f8f8" stroke="#404040" stroke-width="1.3"/><path d="M249.8 268.6 V273.4 H254.6" fill="none" stroke="#404040" stroke-width="1.2"/><path d="M246 277 H252 M246 279.8 H252" stroke="#555" stroke-width="1"/><path d="M263.8 272.9 L267.3 276.5 L270.8 272.9" fill="none" stroke="#444" stroke-width="1.2"/><path d="M235.8 302.4 L244.5 312 L250.8 305.5 L245 297.8 Z" fill="#fbe3a6" stroke="#e0780e" stroke-width="1.3" stroke-linejoin="round"/><path d="M239 304.5 L244.5 312 L248 308 Z" fill="#f5d58a"/><path d="M244.8 297.4 L250.5 292.3 L256 298.2 L250.8 305.5" fill="#f4f4f4" stroke="#333" stroke-width="1.3"/><path d="M252.3 294.3 L254.5 292 L253 290.5 L256.5 287 L259 289.5 L255.5 293 L254.2 291.8" fill="none" stroke="#333" stroke-width="1.3"/><path d="M274.5 335.5 V330.0 H280" fill="none" stroke="#605e5c" stroke-width="1"/><path d="M277 332.5 L283.5 339.0 M283.5 334.5 V339.0 H279" fill="none" stroke="#605e5c" stroke-width="1"/><rect x="288.0" y="231" width="1" height="108" fill="#c8c6c4"/><rect x="299.5" y="240.5" width="143" height="28" fill="#fff" stroke="#c2c0be"/><path d="M431.45 253.1 L435.2 256.9 L438.95 253.1" fill="none" stroke="#333" stroke-width="1.3"/><rect x="445.5" y="240.5" width="61" height="28" fill="#fff" stroke="#c2c0be"/><path d="M495.65 253.1 L499.4 256.9 L503.15 253.1" fill="none" stroke="#333" stroke-width="1.3"/><path d="M529.5 248.5 L531.5 246.3 L533.5 248.5" fill="none" stroke="#1e8ad6" stroke-width="1.3"/><path d="M555.3 245.8 L558 248.3 L560.7 245.8" fill="none" stroke="#1e8ad6" stroke-width="1.3"/><rect x="299.5" y="280.5" width="27.5" height="28" fill="#c8c6c4" stroke="#8a8886"/><rect x="368.3" y="300.5" width="9.5" height="1.4" fill="#444"/><path d="M391.7 292.2 L395.2 295.8 L398.7 292.2" fill="none" stroke="#444" stroke-width="1.2"/><rect x="410.0" y="281" width="1" height="27" fill="#c8c6c4"/><path d="M419.5 284.5 H437.5 V302 M419.5 284.5 V302 M428.5 284.5 V302 M419.5 293.3 H437.5" fill="none" stroke="#555" stroke-width="1" stroke-dasharray="1 1.2"/><rect x="419" y="301.6" width="19" height="1.6" fill="#444"/><path d="M448.0 292.2 L451.5 295.8 L455.0 292.2" fill="none" stroke="#444" stroke-width="1.2"/><rect x="465.8" y="281" width="1" height="27" fill="#c8c6c4"/><path d="M478 291.8 L484.2 285.5 L490.6 291.5 L484.5 297.7 Z" fill="#fafafa" stroke="#333" stroke-width="1.2" stroke-linejoin="round"/><path d="M482.6 287 V284.6 C482.6 283 485 283 485 284.6 V290" fill="none" stroke="#333" stroke-width="1.1"/><path d="M490 289.5 C491.5 288.5 493 289.5 493 292 V295" fill="none" stroke="#1d6fb8" stroke-width="1.8"/><rect x="475" y="299" width="20" height="5" fill="#ffff00"/><path d="M504.0 292.2 L507.5 295.8 L511.0 292.2" fill="none" stroke="#444" stroke-width="1.2"/><rect x="524" y="299" width="20" height="5" fill="#ff0000"/><path d="M553.0 292.2 L556.5 295.8 L560.0 292.2" fill="none" stroke="#444" stroke-width="1.2"/><path d="M562.0 335.5 V330.0 H567.5" fill="none" stroke="#605e5c" stroke-width="1"/><path d="M564.5 332.5 L571.0 339.0 M571.0 334.5 V339.0 H566.5" fill="none" stroke="#605e5c" stroke-width="1"/><rect x="575.5" y="231" width="1" height="108" fill="#c8c6c4"/><rect x="592.0" y="243.9" width="18" height="1.2" fill="#3a3a3a"/><rect x="595.0" y="249.0" width="12" height="1.2" fill="#3a3a3a"/><rect x="592.0" y="254.0" width="18" height="1.2" fill="#3a3a3a"/><rect x="617.5" y="240.5" width="27.5" height="28" fill="#d2d0ce" stroke="#8a8886"/><rect x="622.0" y="247.8" width="18" height="1.2" fill="#3a3a3a"/><rect x="625.0" y="252.8" width="12" height="1.2" fill="#3a3a3a"/><rect x="622.0" y="257.7" width="18" height="1.2" fill="#3a3a3a"/><rect x="652.0" y="252.6" width="18" height="1.2" fill="#3a3a3a"/><rect x="655.0" y="257.79999999999995" width="12" height="1.2" fill="#3a3a3a"/><rect x="652.0" y="262.79999999999995" width="18" height="1.2" fill="#3a3a3a"/><text x="0" y="0" transform="translate(686,259) rotate(-45)" font-family="Liberation Sans" font-size="11.5" fill="#333">ab</text><path d="M688.5 262.8 L702 249.3 M696 249 H702.3 V255.3" fill="none" stroke="#1e8ad6" stroke-width="1.3"/><path d="M707.5 252.79999999999998 L711 256.4 L714.5 252.79999999999998" fill="none" stroke="#444" stroke-width="1.2"/><rect x="741.0" y="237" width="1" height="74" fill="#c8c6c4"/><text x="753.5" y="253.5" font-family="Liberation Sans" font-size="10.5" fill="#333">ab</text><text x="753.5" y="263.5" font-family="Liberation Sans" font-size="10.5" fill="#333">c</text><path d="M769 254.5 C772.5 256.5 771 261 767 260.5 H762 M765 257.5 L762 260.5 L765 263.5" fill="none" stroke="#1e8ad6" stroke-width="1.3"/><rect x="592" y="285.29999999999995" width="18" height="1.2" fill="#3a3a3a"/><rect x="592" y="290.4" width="13" height="1.2" fill="#3a3a3a"/><rect x="592" y="295.4" width="18" height="1.2" fill="#3a3a3a"/><rect x="592" y="300.4" width="13" height="1.2" fill="#3a3a3a"/><rect x="617.5" y="280.5" width="27.5" height="28" fill="#d2d0ce" stroke="#8a8886"/><rect x="622.0" y="285.29999999999995" width="18" height="1.2" fill="#3a3a3a"/><rect x="625.0" y="290.4" width="12" height="1.2" fill="#3a3a3a"/><rect x="622.0" y="295.4" width="18" height="1.2" fill="#3a3a3a"/><rect x="625.0" y="300.4" width="12" height="1.2" fill="#3a3a3a"/><rect x="652" y="285.29999999999995" width="18" height="1.2" fill="#3a3a3a"/><rect x="657" y="290.4" width="13" height="1.2" fill="#3a3a3a"/><rect x="652" y="295.4" width="18" height="1.2" fill="#3a3a3a"/><rect x="657" y="300.4" width="13" height="1.2" fill="#3a3a3a"/><rect x="683" y="285.3" width="18" height="1.2" fill="#3a3a3a"/><rect x="694" y="290.4" width="7" height="1.2" fill="#3a3a3a"/><rect x="694" y="295.4" width="7" height="1.2" fill="#3a3a3a"/><rect x="683" y="300.4" width="18" height="1.2" fill="#3a3a3a"/><path d="M692.5 293.2 H684 M687 290.2 L684 293.2 L687 296.2" fill="none" stroke="#1e8ad6" stroke-width="1.3"/><rect x="713" y="285.3" width="18" height="1.2" fill="#3a3a3a"/><rect x="724" y="290.4" width="7" height="1.2" fill="#3a3a3a"/><rect x="724" y="295.4" width="7" height="1.2" fill="#3a3a3a"/><rect x="713" y="300.4" width="18" height="1.2" fill="#3a3a3a"/><path d="M713 293.2 H721.5 M718.5 290.2 L721.5 293.2 L718.5 296.2" fill="none" stroke="#1e8ad6" stroke-width="1.3"/><rect x="747.5" y="280.5" width="47" height="28" fill="#d2d0ce" stroke="#8a8886"/><rect x="751.5" y="284.5" width="18" height="17.5" fill="#fff" stroke="#3a3a3a" stroke-width="1.3"/><path d="M760.5 284.5 V288 M760.5 298.5 V302" stroke="#3a3a3a" stroke-width="1.2"/><rect x="751.5" y="288.3" width="18" height="10" fill="#fff" stroke="#1e8ad6" stroke-width="1.3"/><path d="M753.5 293.3 H767.5 M756 291 L753.5 293.3 L756 295.6 M765 291 L767.5 293.3 L765 295.6" fill="none" stroke="#1e8ad6" stroke-width="1.2"/><path d="M779.8 292.6 L783.3 296.4 L786.8 292.6" fill="none" stroke="#333" stroke-width="1.3"/><path d="M790.5 335.5 V330.0 H796" fill="none" stroke="#605e5c" stroke-width="1"/><path d="M793 332.5 L799.5 339.0 M799.5 334.5 V339.0 H795" fill="none" stroke="#605e5c" stroke-width="1"/><rect x="804.5" y="231" width="1" height="108" fill="#c8c6c4"/><rect x="815.5" y="240.5" width="173" height="28" fill="#fff" stroke="#c2c0be"/><path d="M976.75 253.1 L980.5 256.9 L984.25 253.1" fill="none" stroke="#333" stroke-width="1.3"/><path d="M847.9 292.3 L851.4 295.90000000000003 L854.9 292.3" fill="none" stroke="#444" stroke-width="1.2"/><rect x="925.9" y="281" width="1" height="27" fill="#c8c6c4"/><path d="M945.5 289.5 H936 M939 286.5 L936 289.5 L939 292.5" fill="none" stroke="#1e8ad6" stroke-width="1.4"/><path d="M965 297.8 H975 M972 294.8 L975 297.8 L972 300.8" fill="none" stroke="#1e8ad6" stroke-width="1.4"/><path d="M984.5 335.5 V330.0 H990" fill="none" stroke="#605e5c" stroke-width="1"/><path d="M987 332.5 L993.5 339.0 M993.5 334.5 V339.0 H989" fill="none" stroke="#605e5c" stroke-width="1"/><rect x="997.5" y="231" width="1" height="108" fill="#c8c6c4"/><rect x="1039.4" y="238.3" width="35.3" height="27.3" fill="#fafafa"/><path d="M1039.6 238.6 V265.4" stroke="#555" stroke-width="1.3"/><path d="M1046 238.6 V265.4" stroke="#555" stroke-width="1.3"/><path d="M1062 238.6 V265.4" stroke="#555" stroke-width="1.3"/><path d="M1068.2 238.6 V265.4" stroke="#555" stroke-width="1.3"/><path d="M1074.5 238.6 V265.4" stroke="#555" stroke-width="1.3"/><path d="M1039.6 238.6 H1074.5" stroke="#555" stroke-width="1.3"/><path d="M1039.6 247.7 H1074.5" stroke="#555" stroke-width="1.3"/><path d="M1039.6 256.5 H1074.5" stroke="#555" stroke-width="1.3"/><path d="M1039.6 265.4 H1074.5" stroke="#555" stroke-width="1.3"/><rect x="1046" y="238.6" width="16" height="9.1" fill="#f5a3ab" stroke="#e02b2b" stroke-width="1.3"/><rect x="1046" y="247.7" width="10.5" height="8.8" fill="#7db5ea" stroke="#2a7fd0" stroke-width="1.3"/><rect x="1046" y="256.5" width="18.8" height="8.9" fill="#f5a3ab" stroke="#e02b2b" stroke-width="1.3"/><rect x="1134.3" y="238.3" width="35.5" height="27.3" fill="#fafafa"/><rect x="1146.6" y="247.7" width="23" height="17.8" fill="#86bdee"/><path d="M1134.5 238.6 V265.4" stroke="#555" stroke-width="1.3"/><path d="M1146.6 238.6 V265.4" stroke="#555" stroke-width="1.3"/><path d="M1158.2 238.6 V265.4" stroke="#555" stroke-width="1.3"/><path d="M1169.6 238.6 V265.4" stroke="#555" stroke-width="1.3"/><path d="M1134.5 238.6 H1169.6" stroke="#555" stroke-width="1.3"/><path d="M1134.5 247.7 H1169.6" stroke="#555" stroke-width="1.3"/><path d="M1134.5 256.5 H1169.6" stroke="#555" stroke-width="1.3"/><path d="M1134.5 265.4 H1169.6" stroke="#555" stroke-width="1.3"/><path d="M1146.6 247.7 H1169.6 V265.4 H1146.6 Z" fill="none" stroke="#2a7fd0" stroke-width="1.3"/><path d="M1168 248.5 C1170 246.5 1172 248.5 1170.5 251.0 L1159 265.5 L1156 263.0 Z" fill="#fafafa" stroke="#333" stroke-width="1.3" stroke-linejoin="round"/><path d="M1155.5 262.5 C1152 263.5 1152 268.5 1146 270.5 C1152 273.0 1159 271.5 1159.5 266.0 Z" fill="#86bdee" stroke="#2a7fd0" stroke-width="1.3" stroke-linejoin="round"/><rect x="1216.2" y="238.3" width="35.5" height="27.3" fill="#fafafa"/><path d="M1216.4 238.6 V265.4" stroke="#555" stroke-width="1.3"/><path d="M1222.7 238.6 V265.4" stroke="#555" stroke-width="1.3"/><path d="M1245.1 238.6 V265.4" stroke="#555" stroke-width="1.3"/><path d="M1251.5 238.6 V265.4" stroke="#555" stroke-width="1.3"/><path d="M1216.4 238.6 H1251.5" stroke="#555" stroke-width="1.3"/><path d="M1216.4 244.4 H1251.5" stroke="#555" stroke-width="1.3"/><path d="M1216.4 258.5 H1251.5" stroke="#555" stroke-width="1.3"/><path d="M1216.4 265.4 H1251.5" stroke="#555" stroke-width="1.3"/><rect x="1222.7" y="244.4" width="22.4" height="14.1" fill="#86bdee" stroke="#2a7fd0" stroke-width="1.3"/><path d="M1250 248.5 C1252 246.5 1254 248.5 1252.5 251.0 L1241 265.5 L1238 263.0 Z" fill="#fafafa" stroke="#333" stroke-width="1.3" stroke-linejoin="round"/><path d="M1237.5 262.5 C1234 263.5 1234 268.5 1228 270.5 C1234 273.0 1241 271.5 1241.5 266.0 Z" fill="#86bdee" stroke="#2a7fd0" stroke-width="1.3" stroke-linejoin="round"/><path d="M1092.7 301.4 L1096.2 305.0 L1099.7 301.4" fill="none" stroke="#444" stroke-width="1.2"/><path d="M1187.8 301.4 L1191.3 305.0 L1194.8 301.4" fill="none" stroke="#444" stroke-width="1.2"/><path d="M1249.9 301.4 L1253.4 305.0 L1256.9 301.4" fill="none" stroke="#444" stroke-width="1.2"/><rect x="1277.1" y="231" width="1" height="108" fill="#c8c6c4"/><rect x="1292.5" y="233.8" width="19" height="16.2" fill="#fafafa"/><path d="M1292.5 233.8 V250" stroke="#555" stroke-width="1.3"/><path d="M1298.8 233.8 V250" stroke="#555" stroke-width="1.3"/><path d="M1305.3 233.8 V250" stroke="#555" stroke-width="1.3"/><path d="M1311.5 233.8 V250" stroke="#555" stroke-width="1.3"/><path d="M1292.5 233.8 H1311.5" stroke="#555" stroke-width="1.3"/><path d="M1292.5 239.2 H1311.5" stroke="#555" stroke-width="1.3"/><path d="M1292.5 244.6 H1311.5" stroke="#555" stroke-width="1.3"/><path d="M1292.5 250 H1311.5" stroke="#555" stroke-width="1.3"/><rect x="1304" y="237.5" width="7.5" height="8.5" fill="#7db5ea" stroke="#2a7fd0" stroke-width="1.2"/><path d="M1303 241.8 H1294.5 M1297.5 238.8 L1294.5 241.8 L1297.5 244.8" fill="none" stroke="#1e8ad6" stroke-width="1.3"/><rect x="1292.5" y="262.6" width="19" height="16.8" fill="#fafafa"/><path d="M1292.5 262.6 V279.4" stroke="#555" stroke-width="1.3"/><path d="M1298.8 262.6 V279.4" stroke="#555" stroke-width="1.3"/><path d="M1305.3 262.6 V279.4" stroke="#555" stroke-width="1.3"/><path d="M1311.5 262.6 V279.4" stroke="#555" stroke-width="1.3"/><path d="M1292.5 262.6 H1311.5" stroke="#555" stroke-width="1.3"/><path d="M1292.5 268.2 H1311.5" stroke="#555" stroke-width="1.3"/><path d="M1292.5 273.8 H1311.5" stroke="#555" stroke-width="1.3"/><path d="M1292.5 279.4 H1311.5" stroke="#555" stroke-width="1.3"/><rect x="1296" y="266.5" width="7.5" height="8.5" fill="#7db5ea" stroke="#2a7fd0" stroke-width="1.2"/><path d="M1304.5 267 L1311 274 M1311 267 L1304.5 274" stroke="#e02b2b" stroke-width="1.4"/><rect x="1292.5" y="294" width="19" height="15.4" fill="#fafafa"/><path d="M1292.5 294 V309.3" stroke="#555" stroke-width="1.3"/><path d="M1298.8 294 V309.3" stroke="#555" stroke-width="1.3"/><path d="M1305.3 294 V309.3" stroke="#555" stroke-width="1.3"/><path d="M1311.5 294 V309.3" stroke="#555" stroke-width="1.3"/><path d="M1292.5 294 H1311.5" stroke="#555" stroke-width="1.3"/><path d="M1292.5 299.1 H1311.5" stroke="#555" stroke-width="1.3"/><path d="M1292.5 304.2 H1311.5" stroke="#555" stroke-width="1.3"/><path d="M1292.5 309.3 H1311.5" stroke="#555" stroke-width="1.3"/><rect x="1296" y="297" width="12" height="9" fill="#7db5ea" stroke="#2a7fd0" stroke-width="1.2"/><path d="M1296 291.2 H1308 M1296 289.5 V293 M1308 289.5 V293" stroke="#1e8ad6" stroke-width="1.2"/><path d="M1379.0 240.5 L1382.5 244.10000000000002 L1386.0 240.5" fill="none" stroke="#444" stroke-width="1.2"/><path d="M1383.9 269.2 L1387.4 272.8 L1390.9 269.2" fill="none" stroke="#444" stroke-width="1.2"/><path d="M1376.5 297.7 L1380 301.3 L1383.5 297.7" fill="none" stroke="#444" stroke-width="1.2"/><rect x="1407.9" y="231" width="1" height="108" fill="#c8c6c4"/><path d="M1440.5 237 V234.2 H1426.5 L1434 242 L1426.5 249.8 H1440.5 V247" fill="none" stroke="#3a3a3a" stroke-width="1.4"/><path d="M1451.9 240.39999999999998 L1455.4 244.0 L1458.9 240.39999999999998" fill="none" stroke="#444" stroke-width="1.2"/><rect x="1423.7" y="262.6" width="19" height="16.6" fill="#f8f8f8" stroke="#3a3a3a" stroke-width="1.3"/><path d="M1423.7 265.5 H1442.7" stroke="#3a3a3a" stroke-width="1.3"/><path d="M1432.8 268.5 V276 M1429.5 272.8 L1432.8 276 L1436 272.8" fill="none" stroke="#1e8ad6" stroke-width="1.4"/><path d="M1448.8 269.5 L1452.3 273.1 L1455.8 269.5" fill="none" stroke="#444" stroke-width="1.2"/><path d="M1433.3 291 L1442 299.5 L1432.5 309 L1423.8 300.3 Z" fill="#f8f8f8" stroke="#a03aa8" stroke-width="1.4" stroke-linejoin="round"/><path d="M1423.8 300.3 L1428.3 295.8 L1437 304.5 L1432.5 309 Z" fill="#dca6df" stroke="#a03aa8" stroke-width="1.4" stroke-linejoin="round"/><path d="M1448.8 298.5 L1452.3 302.1 L1455.8 298.5" fill="none" stroke="#444" stroke-width="1.2"/><text x="1483.6" y="251" font-family="Liberation Sans" font-size="20.5" fill="#1e8ad6">A</text><path d="M1485.5 254 H1495 L1485.8 267.2 H1495.8" fill="none" stroke="#3a3a3a" stroke-width="1.5"/><path d="M1500.2 243.8 H1519 V246.5 L1512.5 253.5 V262.2 H1506.8 V253.5 L1500.2 246.5 Z" fill="#f8f8f8" stroke="#3a3a3a" stroke-width="1.3" stroke-linejoin="round"/><circle cx="1587.3" cy="247.2" r="12.6" fill="#f8f8f8" stroke="#3a3a3a" stroke-width="1.3"/><path d="M1578.3 256.3 L1564.5 270.2" stroke="#3a3a3a" stroke-width="1.4"/><path d="M1517.9 302.0 L1521.4 305.6 L1524.9 302.0" fill="none" stroke="#444" stroke-width="1.2"/><path d="M1617.9 302.0 L1621.4 305.6 L1624.9 302.0" fill="none" stroke="#444" stroke-width="1.2"/><rect x="1639.1" y="231" width="1" height="108" fill="#c8c6c4"/><path d="M1712 263 H1703.5 Q1701.5 263 1701.5 261 V242.5 Q1701.5 240.5 1703.5 240.5 H1714.5 L1719.5 245.5 V254" fill="none" stroke="#2d6fdc" stroke-width="1.3"/><path d="M1710.2 245 C1711 251 1709 256 1705 256.5 M1710 252.5 C1712 254 1714 254.3 1716.5 254" fill="none" stroke="#2d6fdc" stroke-width="1"/><path d="M1718.5 258 L1721.5 255 Q1724 253 1725.5 255 Q1727 257 1725 259.5 L1721.5 263 M1717 262 L1714 265 Q1712 267.5 1713.5 269 Q1715 270.5 1717.5 268.5 L1720.5 265.5 M1716.5 264.3 L1721.5 259.3" fill="none" stroke="#2d6fdc" stroke-width="1.3"/><path d="M1848 263 H1839.5 Q1837.5 263 1837.5 261 V242.5 Q1837.5 240.5 1839.5 240.5 H1850.5 L1855.5 245.5 V256" fill="none" stroke="#2d6fdc" stroke-width="1.3"/><path d="M1846.2 245 C1847 251 1845 256 1841 256.5 M1846 252.5 C1848 254 1850 254.3 1852.5 254" fill="none" stroke="#2d6fdc" stroke-width="1"/><rect x="1848.5" y="257.5" width="13" height="10" rx="1.5" fill="#f3f2f1" stroke="#2d6fdc" stroke-width="1.3"/><path d="M1849 258.5 L1855 263.5 L1861 258.5" fill="none" stroke="#2d6fdc" stroke-width="1.2"/><rect x="1930.0" y="231" width="1" height="108" fill="#c8c6c4"/><path d="M2066 339 L2071.5 333.5 L2077 339" fill="none" stroke="#444" stroke-width="1.3"/></svg>
<div class="t" style="left:204.8px;top:278.75px;font-size:14px;color:#3b3a39;transform:translateX(-50%);">Pegar</div>
<div class="t" style="left:217px;top:328.46px;font-size:12.8px;color:#484644;transform:translateX(-50%);">Portapapeles</div>
<div class="t" style="left:421.8px;top:328.46px;font-size:12.8px;color:#484644;transform:translateX(-50%);">Fuente</div>
<div class="t" style="left:679.4px;top:328.46px;font-size:12.8px;color:#484644;transform:translateX(-50%);">Alineación</div>
<div class="t" style="left:890.8px;top:328.46px;font-size:12.8px;color:#484644;transform:translateX(-50%);">Número</div>
<div class="t" style="left:1137.6px;top:328.46px;font-size:12.8px;color:#484644;transform:translateX(-50%);">Estilos</div>
<div class="t" style="left:1342.5px;top:328.46px;font-size:12.8px;color:#484644;transform:translateX(-50%);">Celdas</div>
<div class="t" style="left:1523px;top:328.46px;font-size:12.8px;color:#484644;transform:translateX(-50%);">Edición</div>
<div class="t" style="left:1784.5px;top:328.46px;font-size:12.8px;color:#484644;transform:translateX(-50%);">Adobe Acrobat</div>
<div class="t" style="left:302.3px;top:247.3px;font-size:15px;color:#262626;">Arial</div>
<div class="t" style="left:448.5px;top:247.3px;font-size:15px;color:#262626;">11</div>
<div class="t" style="left:514px;top:242.22px;font-size:21px;color:#3a3a3a;">A</div>
<div class="t" style="left:546.3px;top:246.88px;font-size:15.5px;color:#3a3a3a;">A</div>
<div class="t" style="left:313.2px;top:284.81px;font-size:17px;color:#262626;transform:translateX(-50%);font-weight:700">N</div>
<div class="t" style="left:342.8px;top:284.81px;font-size:17px;color:#333;transform:translateX(-50%);font-style:italic">K</div>
<div class="t" style="left:373px;top:284.81px;font-size:17px;color:#333;transform:translateX(-50%);">S</div>
<div class="t" style="left:534px;top:281.92px;font-size:19px;color:#333;transform:translateX(-50%);">A</div>
<div class="t" style="left:818.3px;top:247.53px;font-size:14.5px;color:#262626;">General</div>
<div class="t" style="left:828.5px;top:285.07px;font-size:20px;color:#333;transform:translateX(-50%);">$</div>
<div class="t" style="left:877.8px;top:284.72px;font-size:21px;color:#333;transform:translateX(-50%);">%</div>
<div class="t" style="left:907.6px;top:287.87px;font-size:11.5px;color:#555;transform:translateX(-50%);">000</div>
<div class="t" style="left:950px;top:283.07px;font-size:11.5px;color:#333;transform:translateX(-50%);">,0</div>
<div class="t" style="left:947px;top:293.27px;font-size:11.5px;color:#333;transform:translateX(-50%);">,00</div>
<div class="t" style="left:976.5px;top:283.07px;font-size:11.5px;color:#333;transform:translateX(-50%);">,00</div>
<div class="t" style="left:980px;top:293.27px;font-size:11.5px;color:#333;transform:translateX(-50%);">,0</div>
<div class="t" style="left:1056.5px;top:278.24px;font-size:14.6px;color:#3b3a39;transform:translateX(-50%);">Formato</div>
<div class="t" style="left:1011px;top:298.04px;font-size:14.6px;color:#3b3a39;">condicional</div>
<div class="t" style="left:1151.9px;top:278.24px;font-size:14.6px;color:#3b3a39;transform:translateX(-50%);">Dar formato</div>
<div class="t" style="left:1107px;top:298.04px;font-size:14.6px;color:#3b3a39;">como tabla</div>
<div class="t" style="left:1233.5px;top:278.24px;font-size:14.6px;color:#3b3a39;transform:translateX(-50%);">Estilos de</div>
<div class="t" style="left:1209.4px;top:298.04px;font-size:14.6px;color:#3b3a39;">celda</div>
<div class="t" style="left:1316.3px;top:235.34px;font-size:14.6px;color:#3b3a39;">Insertar</div>
<div class="t" style="left:1316.3px;top:263.94px;font-size:14.6px;color:#3b3a39;">Eliminar</div>
<div class="t" style="left:1316.3px;top:292.74px;font-size:14.6px;color:#3b3a39;">Formato</div>
<div class="t" style="left:1501.5px;top:278.24px;font-size:14.6px;color:#3b3a39;transform:translateX(-50%);">Ordenar y</div>
<div class="t" style="left:1477.6px;top:298.04px;font-size:14.6px;color:#3b3a39;">filtrar</div>
<div class="t" style="left:1583.4px;top:278.24px;font-size:14.6px;color:#3b3a39;transform:translateX(-50%);">Buscar y</div>
<div class="t" style="left:1539px;top:298.04px;font-size:14.6px;color:#3b3a39;">seleccionar</div>
<div class="t" style="left:1710px;top:278.24px;font-size:14.6px;color:#3b3a39;transform:translateX(-50%);">Crear PDF y</div>
<div class="t" style="left:1709.8px;top:298.04px;font-size:14.6px;color:#3b3a39;transform:translateX(-50%);">compartir vínculo</div>
<div class="t" style="left:1845.7px;top:278.24px;font-size:14.6px;color:#3b3a39;transform:translateX(-50%);">Crear PDF y compartir</div>
<div class="t" style="left:1845.9px;top:298.04px;font-size:14.6px;color:#3b3a39;transform:translateX(-50%);">con Outlook</div>
<!-- /RIBBON -->
<!-- FBAR -->
<div class="a" style="left:170px;top:343px;width:1914px;height:1px;background:#d6d4d2"></div>
<div class="a" style="left:170px;top:344px;width:1914px;height:9px;background:linear-gradient(#cfcfcf,#e6e6e6)"></div>
<div class="a" style="left:175px;top:357px;width:255px;height:30px;background:#fff;border:1px solid #c6c6c6"></div>
<div class="t" style="left:182.2px;top:365.28px;font-size:15.5px;color:#262626;">B5</div>
<div class="a" style="left:467px;top:357px;width:136px;height:30px;background:#fff;border:1px solid #c6c6c6"></div>
<div class="t" style="left:570px;top:361px;font-size:19px;font-family:'Liberation Serif';font-style:italic;color:#555">f<span style="font-size:15px">x</span></div>
<div class="a" style="left:607px;top:357px;width:1476px;height:30px;background:#fff;border:1px solid #c6c6c6"></div>
<div class="t" style="left:621.4px;top:364.6px;font-size:15px;color:#262626;">ANTICIPO BIMESTRAL RÉGIMEN SIMPLE</div>
<svg class="a" style="left:0;top:0" width="2236" height="420" viewBox="0 0 2236 420"><path d="M413 370 H421 L417 374.5 Z" fill="#5a5a5a"/><circle cx="448.5" cy="366.5" r="1.3" fill="#9a9a9a"/><circle cx="448.5" cy="372" r="1.3" fill="#9a9a9a"/><circle cx="448.5" cy="377.5" r="1.3" fill="#9a9a9a"/><path d="M483 366 L495 378 M495 366 L483 378" stroke="#a8a8a8" stroke-width="1.6"/><path d="M529 372.5 L533.5 377.5 L541.5 366.5" fill="none" stroke="#b0b0b0" stroke-width="2.2"/><path d="M2067.5 369.5 L2072.4 374.2 L2077.3 369.5" fill="none" stroke="#666" stroke-width="2"/></svg>
<div class="a" style="left:170px;top:399px;width:1893px;height:1px;background:#ababab"></div>
<div class="a" style="left:2062px;top:399px;width:1px;height:707px;background:#ababab"></div>
<div class="a" style="left:170px;top:400px;width:1850px;height:508px;background:#fff"></div>
<div class="a" style="left:170px;top:615px;width:1892px;height:1px;background:#a3a3a3"></div>
<div class="a" style="left:2067px;top:400px;width:17px;height:706px;background:#fff;border-left:1px solid #c6c6c6;border-top:1px solid #c6c6c6"></div>
<div class="a" style="left:2068px;top:420px;width:16px;height:1px;background:#c6c6c6"></div>
<div class="a" style="left:2068px;top:1040px;width:16px;height:48px;background:#dcdcdc"></div>
<div class="a" style="left:2068px;top:1088px;width:16px;height:1px;background:#c6c6c6"></div>
<svg class="a" style="left:2067px;top:400px" width="17" height="706" viewBox="0 0 17 706"><path d="M4.5 14 H13.5 L9 9 Z" fill="#606060"/><path d="M4.5 695 H13.5 L9 700 Z" fill="#606060"/></svg>
<!-- /FBAR -->
<!-- BANNER -->
<svg class="a" style="left:170px;top:400px" width="1832" height="130" viewBox="0 0 1832 130">
<defs>
 <pattern id="bp" width="51.9" height="53.2" patternUnits="userSpaceOnUse" patternTransform="translate(25.35 52.90)">
  <rect width="51.9" height="53.2" fill="#00661a"/>
  <path d="M20.60 26.60 L25.95 21.12 L31.30 26.60 L25.95 32.08 Z M9.35 26.60 L25.95 9.58 L42.55 26.60 L25.95 43.62 Z" fill="none" stroke="#065c1b" stroke-width="3.7"/>
  <path d="M-11.80 0.00 L0.00 -12.10 L11.80 0.00 L0.00 12.10 Z M-23.80 0.00 L0.00 -24.40 L23.80 0.00 L0.00 24.40 Z M40.10 0.00 L51.90 -12.10 L63.70 0.00 L51.90 12.10 Z M28.10 0.00 L51.90 -24.40 L75.70 0.00 L51.90 24.40 Z M-11.80 53.20 L0.00 41.10 L11.80 53.20 L0.00 65.30 Z M-23.80 53.20 L0.00 28.80 L23.80 53.20 L0.00 77.60 Z M40.10 53.20 L51.90 41.10 L63.70 53.20 L51.90 65.30 Z M28.10 53.20 L51.90 28.80 L75.70 53.20 L51.90 77.60 Z " fill="none" stroke="#065c1b" stroke-width="3.5"/>
 </pattern>
</defs>
<rect x="0" y="0" width="1832" height="129.5" fill="url(#bp)"/>
</svg>
<div class="a" style="left:170px;top:529px;width:1832px;height:11px;background:linear-gradient(rgba(0,0,0,0.33),rgba(0,0,0,0.12) 40%,rgba(0,0,0,0))"></div>
<div class="a" style="left:196px;top:408px;width:120px;height:110px;background:#fff;border-radius:5px;box-shadow:0 2px 4px rgba(0,0,0,0.35)"></div>
<svg class="a" style="left:195px;top:405px" width="125" height="115" viewBox="0 0 1423 1309">
<path d="M620 255 L712 195 L1001 880 C1050 1000 1110 1105 1215 1105 L1215 1125 L815 1125 C880 1080 900 1000 870 950 L620 360 L380 960 C355 1030 400 1100 490 1125 L170 1125 L170 1105 C250 1105 320 1060 370 940 Z" fill="#036317"/>
<path d="M578 288 C470 340 420 420 425 520 C430 640 520 690 650 740 C790 790 860 840 875 950 C885 1060 790 1115 625 1122 C850 1120 990 1040 985 880 C980 740 900 690 740 635 C600 585 495 545 485 460 C478 390 520 340 578 288 Z" fill="#000" stroke="#fff" stroke-width="16" paint-order="stroke"/>
</svg>
<div class="a" style="left:347px;top:427px;width:859px;height:73px;border-radius:6px;box-shadow:0 4px 7px rgba(0,0,0,0.6);background:#fff"></div>
<svg class="a" style="left:347px;top:427px" width="859" height="73" viewBox="0 0 859 73">
<defs>
 <clipPath id="tbc"><rect x="0" y="0" width="859" height="73" rx="6"/></clipPath>
 <pattern id="tp" width="26.8" height="29.1" patternUnits="userSpaceOnUse" patternTransform="translate(0.3 0)">
  <rect width="26.8" height="29.1" fill="#fff"/>
  <path d="M9.60 14.55 L13.40 10.42 L17.20 14.55 L13.40 18.68 Z M4.20 14.55 L13.40 4.56 L22.60 14.55 L13.40 24.54 Z M-6.60 0.00 L0.00 -7.17 L6.60 0.00 L0.00 7.17 Z M20.20 0.00 L26.80 -7.17 L33.40 0.00 L26.80 7.17 Z M-6.60 29.10 L0.00 21.93 L6.60 29.10 L0.00 36.27 Z M20.20 29.10 L26.80 21.93 L33.40 29.10 L26.80 36.27 Z  M0.00 14.55 L13.40 0.00 L26.80 14.55 L13.40 29.10 Z" fill="none" stroke="#ededed" stroke-width="1.7"/>
 </pattern>
</defs>
<g clip-path="url(#tbc)"><rect x="0" y="0" width="859" height="73" fill="url(#tp)"/>
<rect x="0.5" y="0.5" width="858" height="72" rx="6" fill="none" stroke="#d8d8d8" stroke-width="1"/></g>
</svg>
<div class="a" style="left:375px;top:446px;width:7px;height:40px;border-radius:3.5px;background:#036317"></div>
<div class="t" style="left:394.5px;top:447.5px;font-size:37px;font-weight:700;color:#000">Vencimientos</div>
<div class="a" style="left:1221px;top:427px;width:196px;height:71px;border-radius:6px;background:#fff;box-shadow:0 4px 7px rgba(0,0,0,0.55)"></div>
<div class="a" style="left:1435px;top:427px;width:196px;height:71px;border-radius:6px;background:#fff;box-shadow:0 4px 7px rgba(0,0,0,0.55)"></div>
<svg class="a" style="left:1221px;top:427px" width="420" height="75" viewBox="1221 427 420 75">
<defs>
 <linearGradient id="ig" x1="0" y1="0" x2="1" y2="1">
  <stop offset="0" stop-color="#047a22"/><stop offset="0.55" stop-color="#025a16"/><stop offset="1" stop-color="#013a0b"/>
 </linearGradient>
</defs>
<rect x="1232" y="435.6" width="59" height="56" rx="12" fill="url(#ig)"/>
<path d="M1261 449 L1244 463.6 H1247.5 V479 H1256.7 V471 C1256.7 465.5 1266.2 465.5 1266.2 471 V479 H1275.6 V463.6 H1279 Z" fill="#fff"/>
<rect x="1446" y="434" width="59" height="58.6" rx="12" fill="url(#ig)"/>
<path d="M1465 442 H1480.6 L1492.2 453.5 V477 Q1492.2 482.1 1487 482.1 H1465 Q1460 482.1 1460 477 V447 Q1460 442 1465 442 Z" fill="#fff"/>
<path d="M1480.6 442 V453.5 H1492.2" fill="#cfe3d3"/>
<path d="M1467.5 454.3 H1474 M1467.5 461.6 H1485 M1467.5 469 H1485" stroke="#036317" stroke-width="2.4" stroke-linecap="round"/>
</svg>
<div class="t" style="left:1302px;top:449.7px;font-size:27px;font-weight:700;color:#056b1c">Menú</div>
<div class="t" style="left:1516px;top:438.2px;font-size:19.6px;font-weight:700;color:#056b1c">Formulario</div>
<div class="t" style="left:1537px;top:463.8px;font-size:25.5px;font-weight:700;color:#056b1c;transform:scaleX(1.06);transform-origin:left">2593</div>
<!-- /BANNER -->
<!-- TABLE -->
<div class="a" style="left:357px;top:556px;width:1289px;height:32px;background:#036118;border-top-left-radius:1px"></div>
<div class="a" style="left:357px;top:588px;width:1289px;height:27px;background:#c0c0c0"></div>
<div class="a" style="left:357px;top:616px;width:1289px;height:27px;background:#e2efda"></div>
<div class="a" style="left:357px;top:644px;width:1289px;height:27px;background:#fff"></div>
<div class="a" style="left:357px;top:672px;width:1289px;height:27px;background:#e2efda"></div>
<div class="a" style="left:357px;top:700px;width:1289px;height:27px;background:#fff"></div>
<div class="a" style="left:357px;top:728px;width:1289px;height:27px;background:#e2efda"></div>
<div class="a" style="left:357px;top:756px;width:1289px;height:27px;background:#fff"></div>
<div class="a" style="left:357px;top:784px;width:1289px;height:27px;background:#e2efda"></div>
<div class="a" style="left:357px;top:812px;width:1289px;height:27px;background:#fff"></div>
<div class="a" style="left:357px;top:840px;width:1289px;height:27px;background:#e2efda"></div>
<div class="a" style="left:357px;top:868px;width:1289px;height:27px;background:#fff"></div>
<svg class="a" style="left:0;top:0" width="2236" height="1000" viewBox="0 0 2236 1000"><path d="M357 587.5 H1646" stroke="#fff" stroke-width="1" stroke-dasharray="1 3"/><path d="M357 615.5 H1646" stroke="#a3a3a3" stroke-width="1"/><path d="M357 643.5 H1646" stroke="#0b6b1e" stroke-width="1" stroke-dasharray="2.5 1.5"/><path d="M357 671.5 H1646" stroke="#0b6b1e" stroke-width="1" stroke-dasharray="2.5 1.5"/><path d="M357 699.5 H1646" stroke="#0b6b1e" stroke-width="1" stroke-dasharray="2.5 1.5"/><path d="M357 727.5 H1646" stroke="#0b6b1e" stroke-width="1" stroke-dasharray="2.5 1.5"/><path d="M357 755.5 H1646" stroke="#0b6b1e" stroke-width="1" stroke-dasharray="2.5 1.5"/><path d="M357 783.5 H1646" stroke="#0b6b1e" stroke-width="1" stroke-dasharray="2.5 1.5"/><path d="M357 811.5 H1646" stroke="#0b6b1e" stroke-width="1" stroke-dasharray="2.5 1.5"/><path d="M357 839.5 H1646" stroke="#0b6b1e" stroke-width="1" stroke-dasharray="2.5 1.5"/><path d="M357 867.5 H1646" stroke="#0b6b1e" stroke-width="1" stroke-dasharray="2.5 1.5"/><path d="M358 894.5 H460" stroke="#0b6b1e" stroke-width="1.3"/><path d="M462 894.5 H637" stroke="#0b6b1e" stroke-width="1" stroke-dasharray="2.5 1.5"/><path d="M639 894.5 H809" stroke="#0b6b1e" stroke-width="1" stroke-dasharray="2.5 1.5"/><path d="M811 894.5 H975" stroke="#0b6b1e" stroke-width="1.3"/><path d="M977 894.5 H1205" stroke="#0b6b1e" stroke-width="1.3"/><path d="M1207 894.5 H1429" stroke="#0b6b1e" stroke-width="1" stroke-dasharray="2.5 1.5"/><path d="M1431 894.5 H1645" stroke="#0b6b1e" stroke-width="1.3"/><path d="M461.5 588 V895" stroke="#0b6b1e" stroke-width="1" stroke-dasharray="2.7 1.3"/><path d="M638.5 588 V895" stroke="#0b6b1e" stroke-width="1" stroke-dasharray="2.7 1.3"/><path d="M810.5 588 V895" stroke="#0b6b1e" stroke-width="1" stroke-dasharray="2.7 1.3"/><path d="M976.5 588 V895" stroke="#0b6b1e" stroke-width="1" stroke-dasharray="2.7 1.3"/><path d="M1206.5 588 V895" stroke="#0b6b1e" stroke-width="1" stroke-dasharray="2.7 1.3"/><path d="M1430.5 588 V895" stroke="#0b6b1e" stroke-width="1" stroke-dasharray="2.7 1.3"/><path d="M357.7 556 V896" stroke="#0b6b1e" stroke-width="1.5"/><path d="M1645.5 556 V895.5" stroke="#0b6b1e" stroke-width="1.1"/></svg>
<div class="t" style="left:1001.5px;top:562.56px;font-size:18px;font-weight:700;color:#fff;transform:translateX(-50%)">ANTICIPO BIMESTRAL RÉGIMEN SIMPLE</div>
<div class="t" style="left:409.0px;top:591.73px;font-size:17.8px;font-weight:700;color:#000;transform:translateX(-50%)">NIT</div>
<div class="t" style="left:549.5px;top:591.73px;font-size:17.8px;font-weight:700;color:#000;transform:translateX(-50%)">ENE - FEB</div>
<div class="t" style="left:724.0px;top:591.73px;font-size:17.8px;font-weight:700;color:#000;transform:translateX(-50%)">MAR - ABR</div>
<div class="t" style="left:893.0px;top:591.73px;font-size:17.8px;font-weight:700;color:#000;transform:translateX(-50%)">MAY - JUN</div>
<div class="t" style="left:1091.0px;top:591.73px;font-size:17.8px;font-weight:700;color:#000;transform:translateX(-50%)">JUL - AGO</div>
<div class="t" style="left:1318.0px;top:591.73px;font-size:17.8px;font-weight:700;color:#000;transform:translateX(-50%)">SEPT - OCT</div>
<div class="t" style="left:1538.0px;top:591.73px;font-size:17.8px;font-weight:700;color:#000;transform:translateX(-50%)">NOV - DIC</div>
<div class="t" style="right:1781.2px;top:619.82px;font-size:17.7px;font-style:italic;color:#000">1</div>
<div class="t" style="right:1604.2px;top:619.82px;font-size:17.7px;font-style:italic;color:#000">12 mayo de 2026</div>
<div class="t" style="right:1432.2px;top:619.82px;font-size:17.7px;font-style:italic;color:#000">10 junio de 2026</div>
<div class="t" style="right:1266.2px;top:619.82px;font-size:17.7px;font-style:italic;color:#000">9 julio de 2026</div>
<div class="t" style="right:1036.2px;top:619.82px;font-size:17.7px;font-style:italic;color:#000">9 septiembre de 2026</div>
<div class="t" style="right:812.2px;top:619.82px;font-size:17.7px;font-style:italic;color:#000">11 noviembre de 2026</div>
<div class="t" style="right:596.2px;top:619.82px;font-size:17.7px;font-style:italic;color:#000">13 enero de 2027</div>
<div class="t" style="right:1781.2px;top:647.82px;font-size:17.7px;font-style:italic;color:#000">2</div>
<div class="t" style="right:1604.2px;top:647.82px;font-size:17.7px;font-style:italic;color:#000">13 mayo de 2026</div>
<div class="t" style="right:1432.2px;top:647.82px;font-size:17.7px;font-style:italic;color:#000">11 junio de 2026</div>
<div class="t" style="right:1266.2px;top:647.82px;font-size:17.7px;font-style:italic;color:#000">10 julio de 2026</div>
<div class="t" style="right:1036.2px;top:647.82px;font-size:17.7px;font-style:italic;color:#000">10 septiembre de 2026</div>
<div class="t" style="right:812.2px;top:647.82px;font-size:17.7px;font-style:italic;color:#000">12 noviembre de 2026</div>
<div class="t" style="right:596.2px;top:647.82px;font-size:17.7px;font-style:italic;color:#000">14 enero de 2027</div>
<div class="t" style="right:1781.2px;top:675.82px;font-size:17.7px;font-style:italic;color:#000">3</div>
<div class="t" style="right:1604.2px;top:675.82px;font-size:17.7px;font-style:italic;color:#000">14 mayo de 2026</div>
<div class="t" style="right:1432.2px;top:675.82px;font-size:17.7px;font-style:italic;color:#000">12 junio de 2026</div>
<div class="t" style="right:1266.2px;top:675.82px;font-size:17.7px;font-style:italic;color:#000">13 julio de 2026</div>
<div class="t" style="right:1036.2px;top:675.82px;font-size:17.7px;font-style:italic;color:#000">11 septiembre de 2026</div>
<div class="t" style="right:812.2px;top:675.82px;font-size:17.7px;font-style:italic;color:#000">13 noviembre de 2026</div>
<div class="t" style="right:596.2px;top:675.82px;font-size:17.7px;font-style:italic;color:#000">15 enero de 2027</div>
<div class="t" style="right:1781.2px;top:703.82px;font-size:17.7px;font-style:italic;color:#000">4</div>
<div class="t" style="right:1604.2px;top:703.82px;font-size:17.7px;font-style:italic;color:#000">15 mayo de 2026</div>
<div class="t" style="right:1432.2px;top:703.82px;font-size:17.7px;font-style:italic;color:#000">16 junio de 2026</div>
<div class="t" style="right:1266.2px;top:703.82px;font-size:17.7px;font-style:italic;color:#000">14 julio de 2026</div>
<div class="t" style="right:1036.2px;top:703.82px;font-size:17.7px;font-style:italic;color:#000">14 septiembre de 2026</div>
<div class="t" style="right:812.2px;top:703.82px;font-size:17.7px;font-style:italic;color:#000">17 noviembre de 2026</div>
<div class="t" style="right:596.2px;top:703.82px;font-size:17.7px;font-style:italic;color:#000">18 enero de 2027</div>
<div class="t" style="right:1781.2px;top:731.82px;font-size:17.7px;font-style:italic;color:#000">5</div>
<div class="t" style="right:1604.2px;top:731.82px;font-size:17.7px;font-style:italic;color:#000">19 mayo de 2026</div>
<div class="t" style="right:1432.2px;top:731.82px;font-size:17.7px;font-style:italic;color:#000">17 junio de 2026</div>
<div class="t" style="right:1266.2px;top:731.82px;font-size:17.7px;font-style:italic;color:#000">15 julio de 2026</div>
<div class="t" style="right:1036.2px;top:731.82px;font-size:17.7px;font-style:italic;color:#000">15 septiembre de 2026</div>
<div class="t" style="right:812.2px;top:731.82px;font-size:17.7px;font-style:italic;color:#000">18 noviembre de 2026</div>
<div class="t" style="right:596.2px;top:731.82px;font-size:17.7px;font-style:italic;color:#000">19 enero de 2027</div>
<div class="t" style="right:1781.2px;top:759.82px;font-size:17.7px;font-style:italic;color:#000">6</div>
<div class="t" style="right:1604.2px;top:759.82px;font-size:17.7px;font-style:italic;color:#000">20 mayo de 2026</div>
<div class="t" style="right:1432.2px;top:759.82px;font-size:17.7px;font-style:italic;color:#000">18 junio de 2026</div>
<div class="t" style="right:1266.2px;top:759.82px;font-size:17.7px;font-style:italic;color:#000">16 julio de 2026</div>
<div class="t" style="right:1036.2px;top:759.82px;font-size:17.7px;font-style:italic;color:#000">16 septiembre de 2026</div>
<div class="t" style="right:812.2px;top:759.82px;font-size:17.7px;font-style:italic;color:#000">19 noviembre de 2026</div>
<div class="t" style="right:596.2px;top:759.82px;font-size:17.7px;font-style:italic;color:#000">20 enero de 2027</div>
<div class="t" style="right:1781.2px;top:787.82px;font-size:17.7px;font-style:italic;color:#000">7</div>
<div class="t" style="right:1604.2px;top:787.82px;font-size:17.7px;font-style:italic;color:#000">21 mayo de 2026</div>
<div class="t" style="right:1432.2px;top:787.82px;font-size:17.7px;font-style:italic;color:#000">19 junio de 2026</div>
<div class="t" style="right:1266.2px;top:787.82px;font-size:17.7px;font-style:italic;color:#000">17 julio de 2026</div>
<div class="t" style="right:1036.2px;top:787.82px;font-size:17.7px;font-style:italic;color:#000">17 septiembre de 2026</div>
<div class="t" style="right:812.2px;top:787.82px;font-size:17.7px;font-style:italic;color:#000">20 noviembre de 2026</div>
<div class="t" style="right:596.2px;top:787.82px;font-size:17.7px;font-style:italic;color:#000">21 enero de 2027</div>
<div class="t" style="right:1781.2px;top:815.82px;font-size:17.7px;font-style:italic;color:#000">8</div>
<div class="t" style="right:1604.2px;top:815.82px;font-size:17.7px;font-style:italic;color:#000">22 mayo de 2026</div>
<div class="t" style="right:1432.2px;top:815.82px;font-size:17.7px;font-style:italic;color:#000">22 junio de 2026</div>
<div class="t" style="right:1266.2px;top:815.82px;font-size:17.7px;font-style:italic;color:#000">21 julio de 2026</div>
<div class="t" style="right:1036.2px;top:815.82px;font-size:17.7px;font-style:italic;color:#000">18 septiembre de 2026</div>
<div class="t" style="right:812.2px;top:815.82px;font-size:17.7px;font-style:italic;color:#000">23 noviembre de 2026</div>
<div class="t" style="right:596.2px;top:815.82px;font-size:17.7px;font-style:italic;color:#000">22 enero de 2027</div>
<div class="t" style="right:1781.2px;top:843.82px;font-size:17.7px;font-style:italic;color:#000">9</div>
<div class="t" style="right:1604.2px;top:843.82px;font-size:17.7px;font-style:italic;color:#000">25 mayo de 2026</div>
<div class="t" style="right:1432.2px;top:843.82px;font-size:17.7px;font-style:italic;color:#000">23 junio de 2026</div>
<div class="t" style="right:1266.2px;top:843.82px;font-size:17.7px;font-style:italic;color:#000">22 julio de 2026</div>
<div class="t" style="right:1036.2px;top:843.82px;font-size:17.7px;font-style:italic;color:#000">21 septiembre de 2026</div>
<div class="t" style="right:812.2px;top:843.82px;font-size:17.7px;font-style:italic;color:#000">24 noviembre de 2026</div>
<div class="t" style="right:596.2px;top:843.82px;font-size:17.7px;font-style:italic;color:#000">25 enero de 2027</div>
<div class="t" style="right:1781.2px;top:871.82px;font-size:17.7px;font-style:italic;color:#000">0</div>
<div class="t" style="right:1604.2px;top:871.82px;font-size:17.7px;font-style:italic;color:#000">26 mayo de 2026</div>
<div class="t" style="right:1432.2px;top:871.82px;font-size:17.7px;font-style:italic;color:#000">24 junio de 2026</div>
<div class="t" style="right:1266.2px;top:871.82px;font-size:17.7px;font-style:italic;color:#000">23 julio de 2026</div>
<div class="t" style="right:1036.2px;top:871.82px;font-size:17.7px;font-style:italic;color:#000">22 septiembre de 2026</div>
<div class="t" style="right:812.2px;top:871.82px;font-size:17.7px;font-style:italic;color:#000">25 noviembre de 2026</div>
<div class="t" style="right:596.2px;top:871.82px;font-size:17.7px;font-style:italic;color:#000">26 enero de 2027</div>
<!-- /TABLE -->
<!-- TABS -->
<div class="a" style="left:170px;top:908px;width:1892px;height:200px;background:#e6e6e6"></div>
<div class="a" style="left:2020px;top:400px;width:42px;height:508px;background:#e6e6e6"></div>
<div class="a" style="left:2002px;top:400px;width:18px;height:508px;background:#fff"></div>
<div class="a" style="left:2002px;top:615px;width:60px;height:1px;background:#a3a3a3"></div>
<div class="a" style="left:170px;top:1108px;width:1914px;height:29px;background:#e9e9e9"></div>
<div class="a" style="left:170px;top:1108px;width:1897px;height:1px;background:#a6a6a6"></div>
<div class="a" style="left:170px;top:1136.5px;width:1914px;height:1px;background:#d2d2d2"></div>
<div class="a" style="left:170px;top:1137.5px;width:1914px;height:24.5px;background:#f3f2f1"></div>
<div class="a" style="left:275px;top:1111px;width:170.0px;height:22.5px;background:#92d580"></div>
<div class="t" style="left:360.0px;top:1110.66px;font-size:16.7px;color:#111;transform:translateX(-50%)">11.Liquidación ICA</div>
<div class="a" style="left:450px;top:1111px;width:223.6px;height:22.5px;background:#006414"></div>
<div class="t" style="left:561.8px;top:1110.66px;font-size:16.7px;color:#fff;transform:translateX(-50%)">2.Actividades Económicas</div>
<div class="a" style="left:678.9px;top:1111px;width:88.0px;height:22.5px;background:#92d580"></div>
<div class="t" style="left:722.9px;top:1110.66px;font-size:16.7px;color:#111;transform:translateX(-50%)">3.Tarifas</div>
<div class="a" style="left:772.3px;top:1111px;width:73.3px;height:22.5px;background:#006414"></div>
<div class="t" style="left:809.0px;top:1110.66px;font-size:16.7px;color:#fff;transform:translateX(-50%)">4. G.O.</div>
<div class="a" style="left:851px;top:1111px;width:111.8px;height:22.5px;background:#92d580"></div>
<div class="t" style="left:906.9px;top:1110.66px;font-size:16.7px;color:#111;transform:translateX(-50%)">5.INCRNGO</div>
<div class="a" style="left:967.9px;top:1111px;width:123.8px;height:22.5px;background:#006414"></div>
<div class="t" style="left:1029.8px;top:1110.66px;font-size:16.7px;color:#fff;transform:translateX(-50%)">6.Descuentos</div>
<div class="a" style="left:1097px;top:1111px;width:128.7px;height:22.5px;background:#92d580"></div>
<div class="t" style="left:1161.3px;top:1110.66px;font-size:16.7px;color:#111;transform:translateX(-50%)">7.Retenciones</div>
<div class="a" style="left:1231px;top:1111px;width:63.0px;height:22.5px;background:#006414"></div>
<div class="t" style="left:1262.5px;top:1110.66px;font-size:16.7px;color:#fff;transform:translateX(-50%)">8.INC</div>
<div class="a" style="left:1299.4px;top:1111px;width:61.3px;height:22.5px;background:#92d580"></div>
<div class="t" style="left:1330.1px;top:1110.66px;font-size:16.7px;color:#111;transform:translateX(-50%)">9.IVA</div>
<div class="a" style="left:1366px;top:1111px;width:147.4px;height:22.5px;background:#006414"></div>
<div class="t" style="left:1439.7px;top:1110.66px;font-size:16.7px;color:#fff;transform:translateX(-50%)">12.F-2593 (RST)</div>
<div class="a" style="left:1519px;top:1111px;width:144.6px;height:22.5px;background:#006414"></div>
<div class="t" style="left:1591.3px;top:1110.66px;font-size:16.7px;color:#fff;transform:translateX(-50%)">13.F-2593 (ICA)</div>
<svg class="a" style="left:0;top:0" width="2236" height="1309" viewBox="0 0 2236 1309"><rect x="272.1" y="1112" width="1" height="20.5" fill="#a8a8a8"/><rect x="447.0" y="1112" width="1" height="20.5" fill="#a8a8a8"/><rect x="675.8" y="1112" width="1" height="20.5" fill="#a8a8a8"/><rect x="769.1" y="1112" width="1" height="20.5" fill="#a8a8a8"/><rect x="847.8" y="1112" width="1" height="20.5" fill="#a8a8a8"/><rect x="964.9" y="1112" width="1" height="20.5" fill="#a8a8a8"/><rect x="1093.9" y="1112" width="1" height="20.5" fill="#a8a8a8"/><rect x="1227.9" y="1112" width="1" height="20.5" fill="#a8a8a8"/><rect x="1296.2" y="1112" width="1" height="20.5" fill="#a8a8a8"/><rect x="1362.9" y="1112" width="1" height="20.5" fill="#a8a8a8"/><rect x="1515.7" y="1112" width="1" height="20.5" fill="#a8a8a8"/><path d="M202 1118 V1127 L196.8 1122.5 Z" fill="#217346"/><path d="M226.5 1118 V1127 L231.5 1122.5 Z" fill="#c2c2c2"/><rect x="250.29999999999998" y="1123.8" width="1.7" height="1.7" fill="#217346"/><rect x="256.4" y="1123.8" width="1.7" height="1.7" fill="#217346"/><rect x="262.5" y="1123.8" width="1.7" height="1.7" fill="#217346"/><circle cx="1865" cy="1122.9" r="9.6" fill="none" stroke="#777" stroke-width="1.3"/><path d="M1860 1122.9 H1870 M1865 1117.9 V1127.9" stroke="#666" stroke-width="1.6"/><rect x="1906" y="1117.7" width="1.6" height="1.6" fill="#9a9a9a"/><rect x="1906" y="1122.2" width="1.6" height="1.6" fill="#9a9a9a"/><rect x="1906" y="1126.7" width="1.6" height="1.6" fill="#9a9a9a"/><rect x="1924.5" y="1113.5" width="136" height="18" fill="#fff" stroke="#b8b8b8"/><path d="M1943.5 1113.5 V1131.5 M2040.5 1113.5 V1131.5" stroke="#c6c6c6"/><path d="M1936.5 1118 V1127 L1931 1122.5 Z" fill="#555"/><path d="M2048 1118 V1127 L2053.5 1122.5 Z" fill="#555"/><rect x="1717" y="1137.5" width="49.7" height="24.5" fill="#d4d4d4"/><path d="M1733.5 1142.5 H1749.5 V1158.5 H1733.5 Z M1738.8 1142.5 V1158.5 M1744.2 1142.5 V1158.5 M1733.5 1147.8 H1749.5 M1733.5 1153.2 H1749.5" fill="none" stroke="#505050" stroke-width="1.4"/><rect x="1783.5" y="1142.5" width="17" height="16" fill="none" stroke="#555" stroke-width="1.5"/><rect x="1786.8" y="1145.5" width="10.4" height="10" fill="none" stroke="#555" stroke-width="1.2"/><path d="M1789 1148.5 H1795 M1789 1151 H1795 M1789 1153.5 H1795" stroke="#777" stroke-width="1"/><path d="M1833.5 1158.5 V1142.5 H1850.5 V1158.5 Z M1833.5 1153 H1844 V1142.5 M1838.5 1142.5 V1153" fill="none" stroke="#555" stroke-width="1.4"/><path d="M1873.7 1150.6 H1883" stroke="#555" stroke-width="1.3"/><path d="M1890.5 1150.5 H2014.6" stroke="#b4b4b4" stroke-width="1"/><rect x="1949.5" y="1144" width="7" height="13.5" fill="#777"/><path d="M2020 1150.5 H2030 M2025 1145.5 V1155.5" stroke="#555" stroke-width="1.3"/><rect x="230.5" y="1143.7" width="17" height="15.5" fill="none" stroke="#555" stroke-width="1.3"/><path d="M230.5 1146.5 H247.5" stroke="#555" stroke-width="1.2"/><path d="M233 1150 H237 M233 1153 H236 M233 1156 H236" stroke="#777" stroke-width="1"/><circle cx="242" cy="1154" r="5.2" fill="#f3f2f1" stroke="#555" stroke-width="1.3"/><circle cx="242" cy="1154" r="2.3" fill="#555"/></svg>
<div class="a" style="left:1666.5px;top:1108px;width:155px;height:26px;background:#fff;border:1px solid #a6a6a6;border-bottom:none"></div>
<div class="a" style="left:1669px;top:1110.5px;width:150px;height:20.5px;background:linear-gradient(#fff 15%,#9fcda3)"></div>
<div class="a" style="left:1666.5px;top:1132px;width:155px;height:2px;background:#217346"></div>
<div class="t" style="left:1744.9px;top:1110.86px;font-size:16.7px;font-weight:700;color:#1f6f3f;transform:translateX(-50%)">14.Vencimientos</div>
<div class="t" style="left:178px;top:1144.7px;font-size:13px;color:#444">Listo</div>
<div class="t" style="left:2047.2px;top:1145.84px;font-size:12px;color:#555">100%</div>
<!-- /TABS -->

</body></html>
